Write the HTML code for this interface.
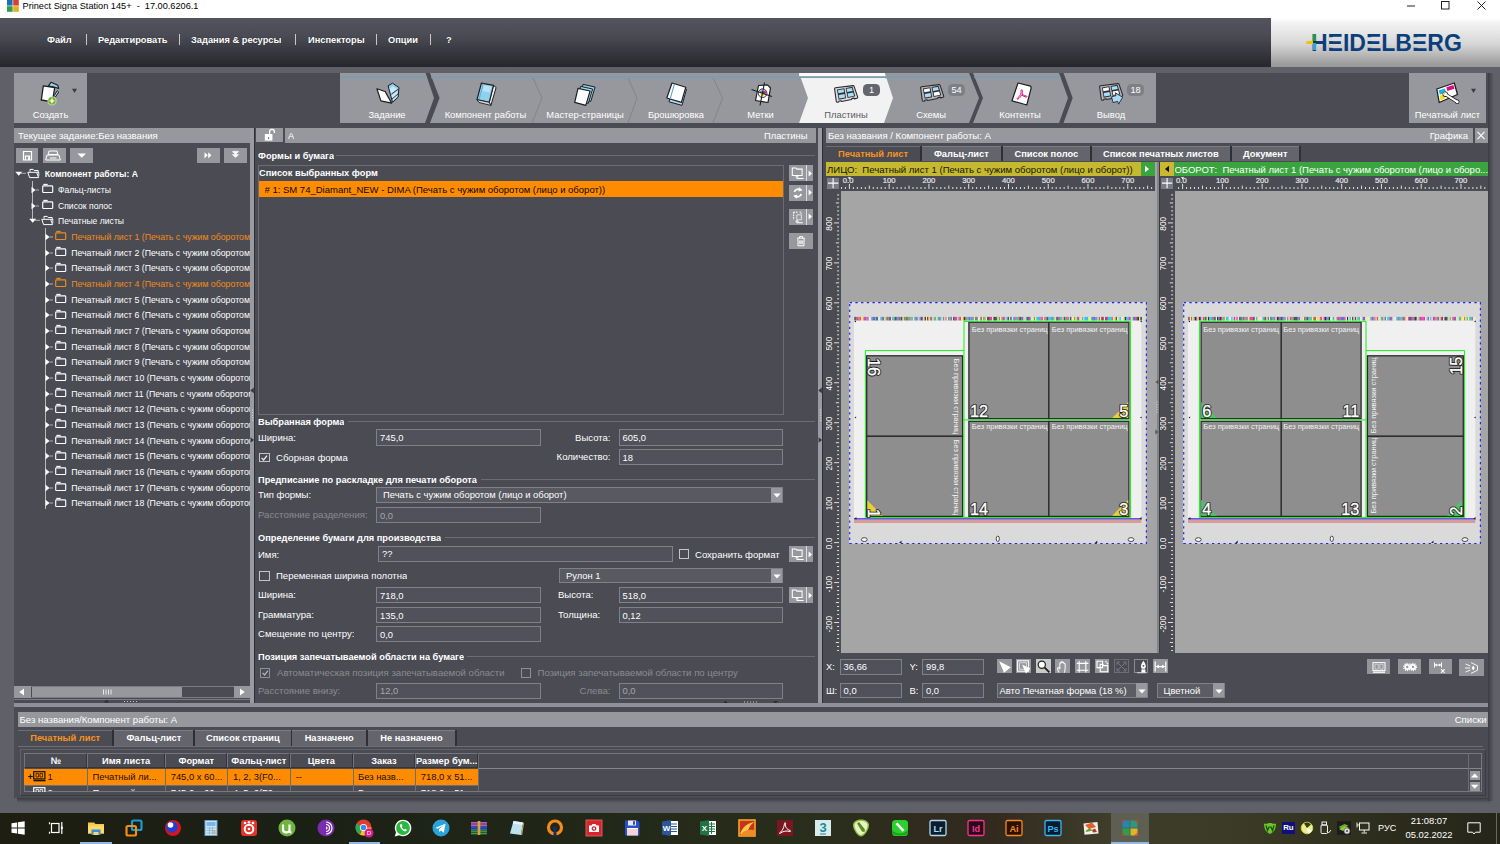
<!DOCTYPE html>
<html lang="ru"><head><meta charset="utf-8"><title>Prinect Signa Station</title>
<style>
html,body{margin:0;padding:0;}
body{width:1500px;height:844px;overflow:hidden;position:relative;background:#5f6068;font-family:"Liberation Sans",sans-serif;font-size:9.4px;color:#fff;}
div,svg,span{position:absolute;box-sizing:border-box;}
.t{white-space:nowrap;overflow:hidden;}
.btn{background:#97989d;}
.fld{background:#50515a;border:1px solid #808188;color:#fff;font-size:9.4px;padding-left:3px;white-space:nowrap;overflow:hidden;}
.hdr{background:#97989d;color:#fff;}
.cb{width:11px;height:11px;border:1px solid #b9babd;background:#4a4b53;}
</style></head><body>

<div style="left:0px;top:0px;width:1500px;height:18px;background:#fff;"></div>
<svg style="left:6px;top:-0.500px" width="14" height="14" viewBox="0 0 14 14"><rect x="1" y="0" width="5.6" height="5.6" fill="#1b6fb8"/><rect x="7.2" y="0" width="5.6" height="5.6" fill="#d8402f"/><rect x="1" y="6.2" width="5.6" height="5.6" fill="#2f9c48"/><rect x="7.2" y="6.2" width="5.6" height="5.6" fill="#e0b020"/></svg>
<div class="t" style="left:22.5px;top:0.0px;height:12px;line-height:12px;font-size:9.2px;color:#000;">Prinect Signa Station 145+&nbsp; -&nbsp; 17.00.6206.1</div>
<svg style="left:1400px;top:0" width="100" height="14" viewBox="0 0 100 14"><path d="M7 6h8" stroke="#222" stroke-width="1" fill="none"/><rect x="41.5" y="1.5" width="7.5" height="7.5" stroke="#222" fill="none"/><path d="M77.5 1.5l8 8M85.5 1.5l-8 8" stroke="#222" stroke-width="1" fill="none"/></svg>
<div style="left:0px;top:18px;width:1500px;height:49px;background:linear-gradient(#52535c 0%,#4a4b54 35%,#34353b 75%,#26272c 100%);"></div>
<div class="t" style="left:47px;top:33.5px;height:12px;line-height:12px;font-size:9.3px;color:#fff;font-weight:bold;text-shadow:0 0 1px #222;">Файл</div>
<div class="t" style="left:98px;top:33.5px;height:12px;line-height:12px;font-size:9.3px;color:#fff;font-weight:bold;text-shadow:0 0 1px #222;">Редактировать</div>
<div class="t" style="left:191px;top:33.5px;height:12px;line-height:12px;font-size:9.3px;color:#fff;font-weight:bold;text-shadow:0 0 1px #222;">Задания &amp; ресурсы</div>
<div class="t" style="left:308px;top:33.5px;height:12px;line-height:12px;font-size:9.3px;color:#fff;font-weight:bold;text-shadow:0 0 1px #222;">Инспекторы</div>
<div class="t" style="left:388px;top:33.5px;height:12px;line-height:12px;font-size:9.3px;color:#fff;font-weight:bold;text-shadow:0 0 1px #222;">Опции</div>
<div class="t" style="left:446px;top:33.5px;height:12px;line-height:12px;font-size:9.3px;color:#fff;font-weight:bold;text-shadow:0 0 1px #222;">?</div>
<div style="left:86px;top:34px;width:1px;height:11px;background:#c8c8cc;"></div>
<div style="left:179px;top:34px;width:1px;height:11px;background:#c8c8cc;"></div>
<div style="left:295px;top:34px;width:1px;height:11px;background:#c8c8cc;"></div>
<div style="left:376px;top:34px;width:1px;height:11px;background:#c8c8cc;"></div>
<div style="left:430px;top:34px;width:1px;height:11px;background:#c8c8cc;"></div>
<div style="left:1271px;top:18px;width:229px;height:49px;background:linear-gradient(#ffffff 0%,#f3f3f3 9%,#e6e6e6 30%,#d6d6d6 53%,#b4b4b4 78%,#a0a0a0 91%,#989898 100%);"></div>
<div class="t" style="left:1311.200px;top:29.600px;height:26px;line-height:26px;font-size:23.400px;font-weight:bold;color:#0b3f7c;transform:scaleX(0.9836);transform-origin:0 0;overflow:visible;">HEIDELBERG</div>
<div style="left:1328.70px;top:18px;width:4.600px;height:49px;background:linear-gradient(#ffffff 0%,#f3f3f3 9%,#e6e6e6 30%,#d6d6d6 53%,#b4b4b4 78%,#a0a0a0 91%,#989898 100%);clip-path:inset(19.20px 0 26.00px 0);"></div>
<div style="left:1328.70px;top:18px;width:4.600px;height:49px;background:linear-gradient(#ffffff 0%,#f3f3f3 9%,#e6e6e6 30%,#d6d6d6 53%,#b4b4b4 78%,#a0a0a0 91%,#989898 100%);clip-path:inset(25.90px 0 19.20px 0);"></div>
<div style="left:1367.10px;top:18px;width:4.600px;height:49px;background:linear-gradient(#ffffff 0%,#f3f3f3 9%,#e6e6e6 30%,#d6d6d6 53%,#b4b4b4 78%,#a0a0a0 91%,#989898 100%);clip-path:inset(19.20px 0 26.00px 0);"></div>
<div style="left:1367.10px;top:18px;width:4.600px;height:49px;background:linear-gradient(#ffffff 0%,#f3f3f3 9%,#e6e6e6 30%,#d6d6d6 53%,#b4b4b4 78%,#a0a0a0 91%,#989898 100%);clip-path:inset(25.90px 0 19.20px 0);"></div>
<div style="left:1413.10px;top:18px;width:4.600px;height:49px;background:linear-gradient(#ffffff 0%,#f3f3f3 9%,#e6e6e6 30%,#d6d6d6 53%,#b4b4b4 78%,#a0a0a0 91%,#989898 100%);clip-path:inset(19.20px 0 26.00px 0);"></div>
<div style="left:1413.10px;top:18px;width:4.600px;height:49px;background:linear-gradient(#ffffff 0%,#f3f3f3 9%,#e6e6e6 30%,#d6d6d6 53%,#b4b4b4 78%,#a0a0a0 91%,#989898 100%);clip-path:inset(25.90px 0 19.20px 0);"></div>
<div style="left:1312.8px;top:34px;width:3.5px;height:7.2px;background:#1e9a48;"></div>
<div style="left:1312.8px;top:41px;width:3.5px;height:2.4px;background:#0c3a4a;"></div>
<div style="left:1312.8px;top:43.4px;width:3.5px;height:6.8px;background:#2aa6e8;"></div>
<div style="left:1305.5px;top:40.6px;width:7.5px;height:3px;background:#f5c400;border-radius:1.500px 0 0 1.500px;"></div>
<div style="left:14px;top:73px;width:1474px;height:632px;background:#4a4b53;"></div>
<div style="left:14px;top:73px;width:73px;height:50px;background:#97989d;"></div>
<svg style="left:38px;top:80px" width="24" height="27" viewBox="0 0 24 27" stroke-linejoin="round">
<path d="M10.400 5.800L13.100 2.200 19.800 5.300 20.700 8.400 17.500 7.500z" fill="#8fd0ee" stroke="#1e1e22" stroke-width="1.100"/>
<path d="M19.300 10.700L20.700 12 17.500 16.900 16.200 15.500z" fill="#a6d8f0" stroke="#1e1e22" stroke-width="1"/>
<path d="M5.300 5.800L16.700 7.500 14.400 21.800 3.300 20z" fill="#fff" stroke="#1e1e22" stroke-width="1.300"/>
<circle cx="14" cy="20.900" r="4.100" fill="#79b22a" stroke="#dfe9cf" stroke-width="0.700"/>
<path d="M11.600 20.900h4.800M14 18.600v4.600" stroke="#fff" stroke-width="1.400"/>
</svg>
<svg style="left:71px;top:87.600px" width="8" height="6" viewBox="0 0 8 6"><path d="M1 0.800h5L3.500 5z" fill="#3a3b41"/></svg>
<div class="t" style="left:14px;top:109.2px;height:12px;line-height:12px;font-size:9.4px;color:#fff;width:73px;text-align:center;">Создать</div>
<svg style="left:340px;top:73px" width="816" height="50" viewBox="0 0 816 50">
<polygon points="0,0 85.6,0 94,25 85,50 0,50" fill="#97989d"/>
<polygon points="90,0 629,0 639,25 629,50 90,50 99.6,25" fill="#97989d"/>
<polygon points="633,0 719,0 728,25 719,50 633,50 643,25" fill="#97989d"/>
<polygon points="723.5,0 816,0 816,50 723.5,50 732.7,25" fill="#97989d"/>
<polygon points="459,0 544.8,0 553,25 544,50 459,50 468,25" fill="#f2f2f2"/>
<path d="M193,5 L202,25 L192,50 M288,5 L297,25 L288,50 M373,5 L382.6,25 L373,50" stroke="#83848a" stroke-width="1" fill="none"/>
<path d="M0,4.300H86.700M91.200,4.300H459M545,4.300H630.300M634.300,4.300H720.300" stroke="#7d9db1" stroke-width="2" fill="none"/>
<rect x="459" y="0" width="86" height="3.2" fill="#fbfbfb"/>
<rect x="459" y="3.2" width="86.5" height="1.8" fill="#7c9cb0"/>
</svg>
<div class="t" style="left:327px;top:109.2px;height:12px;line-height:12px;font-size:9.4px;color:#fff;width:120px;text-align:center;">Задание</div>
<div class="t" style="left:425.5px;top:109.2px;height:12px;line-height:12px;font-size:9.4px;color:#fff;width:120px;text-align:center;">Компонент работы</div>
<div class="t" style="left:525px;top:109.2px;height:12px;line-height:12px;font-size:9.4px;color:#fff;width:120px;text-align:center;">Мастер-страницы</div>
<div class="t" style="left:616px;top:109.2px;height:12px;line-height:12px;font-size:9.4px;color:#fff;width:120px;text-align:center;">Брошюровка</div>
<div class="t" style="left:700.5px;top:109.2px;height:12px;line-height:12px;font-size:9.4px;color:#fff;width:120px;text-align:center;">Метки</div>
<div class="t" style="left:786px;top:109.2px;height:12px;line-height:12px;font-size:9.4px;color:#5c5d64;width:120px;text-align:center;">Пластины</div>
<div class="t" style="left:871px;top:109.2px;height:12px;line-height:12px;font-size:9.4px;color:#fff;width:120px;text-align:center;">Схемы</div>
<div class="t" style="left:960px;top:109.2px;height:12px;line-height:12px;font-size:9.4px;color:#fff;width:120px;text-align:center;">Контенты</div>
<div class="t" style="left:1051px;top:109.2px;height:12px;line-height:12px;font-size:9.4px;color:#fff;width:120px;text-align:center;">Вывод</div>
<div style="left:863px;top:83.7px;width:17px;height:12.2px;background:#65666d;border-radius:4.500px;"></div>
<div class="t" style="left:863px;top:83.7px;height:12px;line-height:12px;font-size:9.2px;color:#fff;width:17px;text-align:center;">1</div>
<div style="left:948px;top:83.7px;width:17px;height:12.2px;background:#7f8086;border-radius:4.500px;"></div>
<div class="t" style="left:948px;top:83.7px;height:12px;line-height:12px;font-size:9.2px;color:#fff;width:17px;text-align:center;">54</div>
<div style="left:1127px;top:83.7px;width:17px;height:12.2px;background:#7f8086;border-radius:4.500px;"></div>
<div class="t" style="left:1127px;top:83.7px;height:12px;line-height:12px;font-size:9.2px;color:#fff;width:17px;text-align:center;">18</div>
<div style="left:1409px;top:73px;width:77px;height:50px;background:#97989d;"></div>
<svg style="left:1470px;top:87.600px" width="8" height="6" viewBox="0 0 8 6"><path d="M1 0.800h5L3.500 5z" fill="#3a3b41"/></svg>
<div class="t" style="left:1409px;top:109.2px;height:12px;line-height:12px;font-size:9.4px;color:#fff;width:77px;text-align:center;">Печатный лист</div>
<svg style="left:375.6px;top:81.5px" width="24" height="25" viewBox="0 0 24 25" stroke-linejoin="round"><path d="M12.1 3.8L16.5 1.2 22.9 5.5 22.2 15.100 16.500 20.300z" fill="#8fd0ee" stroke="#1e1e22" stroke-width="1"/>
<path d="M13.500 6.500L17 4.200 21.500 7.200 15.500 12zM15.500 13.500l6-4.500-.3 5.500-4 4z" fill="#c9e9f7"/>
<path d="M15.500 12l6.300-4.600M16 17l6-5" stroke="#1e1e22" stroke-width="0.900" fill="none"/>
<path d="M0.900 6.800L9.200 9.500 15.600 21.100 4.900 18.900z" fill="#fff" stroke="#1e1e22" stroke-width="1.200"/></svg>
<svg style="left:476px;top:81.5px" width="24" height="25" viewBox="0 0 24 25" stroke-linejoin="round"><path d="M17.500 3.300L20.100 5.500 14.900 23.400 13.200 20.300z" fill="#f2f2f2" stroke="#1e1e22" stroke-width="1"/>
<path d="M5.400 1.200L17.500 3.300 13.200 20.300 1 17.700z" fill="#8fd0ee" stroke="#1e1e22" stroke-width="1.200"/>
<path d="M7.800 3.300L15.300 4.600 13.800 10.500 6.400 9z" fill="#b9e2f5"/>
<path d="M7.200 1.600L3 18" stroke="#5aa9d0" stroke-width="0.900"/>
<path d="M1 17.700L13.200 20.300 14.900 23.400 3 20.500z" fill="#d8d8d8" stroke="#1e1e22" stroke-width="0.900"/></svg>
<svg style="left:573.5px;top:81.5px" width="24" height="25" viewBox="0 0 24 25" stroke-linejoin="round"><path d="M9 2.400L21.100 5 16.800 19.400 5.500 16.300z" fill="#8fd0ee" stroke="#1e1e22" stroke-width="1"/>
<path d="M6.500 4.400L18.600 7 14.300 21.400 3 18.300z" fill="#a8daf0" stroke="#1e1e22" stroke-width="1"/>
<path d="M4 6.400L16.100 9 11.800 23.400 0.700 20.300z" fill="#fff" stroke="#1e1e22" stroke-width="1.200"/></svg>
<svg style="left:665.6px;top:81.5px" width="24" height="25" viewBox="0 0 24 25" stroke-linejoin="round"><path d="M7.500 3.800L20.500 7.200 16 23.400 3 19.800z" fill="#a8daf0" stroke="#1e1e22" stroke-width="1"/>
<path d="M6 1L19.800 5.200 15.400 20.300 0.800 16z" fill="#fff" stroke="#1e1e22" stroke-width="1.200"/>
<path d="M8.400 2L4.200 16.800" stroke="#5aa9d0" stroke-width="1.100"/></svg>
<svg style="left:750.5px;top:81.5px" width="24" height="25" viewBox="0 0 24 25" stroke-linejoin="round"><path d="M7.500 3.500L16.500 2.800 19.500 6 17 20.500 4.500 18.500z" fill="#fff" stroke="#1e1e22" stroke-width="1.200"/>
<circle cx="11.600" cy="11.200" r="4.300" fill="none" stroke="#1e1e22" stroke-width="0.900"/>
<circle cx="10.400" cy="10" r="1.700" fill="#24a8e0"/><circle cx="13.400" cy="10.300" r="1.700" fill="#e0188c"/><circle cx="11.200" cy="12.800" r="1.700" fill="#f5e11a"/>
<path d="M13.500 0.500L9 23.500M0.500 7.500L21 14.500" stroke="#1e1e22" stroke-width="1.100"/></svg>
<svg style="left:834px;top:84.8px" width="25" height="23" viewBox="0 0 25 23" stroke-linejoin="round"><path d="M1.500 2.700L18.800 0.600Q19.800 0.500 20.100 1.400L23.700 12.200Q23.900 13.100 23 13.300L20.500 13.900 20 13.100 17.800 13.600 17.600 14.500 7.500 16.500 7 15.700 4.800 16.200 4.600 17 3.400 17.200Q2.500 17.300 2.300 16.400L0.600 3.800Q0.500 2.900 1.500 2.700z" fill="#dcdcdc" stroke="#2a2a2e" stroke-width="1.100"/>
<path d="M2.900 4.400L10.400 3.200 12.100 13.300 4.700 14.800zM11.600 2.900L18.500 1.800 21.300 11.300 13.600 12.900z" fill="#2e2e32"/>
<path d="M3.900 5.200L9.600 4.300 10.100 7.300 4.400 8.300z" fill="#a8e0fa"/>
<path d="M12.600 3.800L17.900 3 18.700 5.900 13.200 6.900z" fill="#a8e0fa"/>
<path d="M4.700 10L10.500 9 11.100 12.400 5.300 13.500z" fill="#a8e0fa"/>
<path d="M13.600 8.600L19.200 7.600 20.100 10.800 14.300 11.900z" fill="#a8e0fa"/></svg>
<svg style="left:920px;top:84px" width="25" height="23" viewBox="0 0 25 23" stroke-linejoin="round"><path d="M1.500 2.700L18.800 0.600Q19.800 0.500 20.100 1.400L23.700 12.200Q23.900 13.100 23 13.300L20.500 13.900 20 13.100 17.800 13.600 17.600 14.500 7.500 16.500 7 15.700 4.800 16.200 4.600 17 3.400 17.200Q2.500 17.300 2.300 16.400L0.600 3.800Q0.500 2.900 1.500 2.700z" fill="#b4b5b9" stroke="#2a2a2e" stroke-width="1.100"/>
<path d="M2.900 4.400L10.400 3.200 12.100 13.300 4.700 14.800zM11.600 2.900L18.500 1.800 21.300 11.300 13.600 12.900z" fill="#2e2e32"/>
<path d="M3.900 5.200L9.600 4.300 10.100 7.300 4.400 8.300z" fill="#fff"/>
<path d="M12.600 3.800L17.900 3 18.700 5.900 13.200 6.900z" fill="#a8e0fa"/>
<path d="M4.700 10L10.500 9 11.100 12.400 5.300 13.500z" fill="#a8e0fa"/>
<path d="M13.600 8.600L19.200 7.600 20.100 10.800 14.300 11.900z" fill="#fff"/></svg>
<svg style="left:1099.3px;top:83px" width="25" height="23" viewBox="0 0 25 23" stroke-linejoin="round"><path d="M1.500 2.700L18.800 0.600Q19.800 0.500 20.100 1.400L23.700 12.200Q23.900 13.100 23 13.300L20.500 13.900 20 13.100 17.800 13.600 17.600 14.500 7.500 16.500 7 15.700 4.800 16.200 4.600 17 3.400 17.200Q2.500 17.300 2.300 16.400L0.600 3.800Q0.500 2.900 1.500 2.700z" fill="#b4b5b9" stroke="#2a2a2e" stroke-width="1.100"/>
<path d="M2.900 4.400L10.400 3.200 12.100 13.300 4.700 14.800zM11.600 2.900L18.500 1.800 21.300 11.300 13.600 12.900z" fill="#2e2e32"/>
<path d="M3.900 5.200L9.600 4.300 10.100 7.300 4.400 8.300z" fill="#fff"/>
<path d="M12.600 3.800L17.900 3 18.700 5.900 13.200 6.900z" fill="#a8e0fa"/>
<path d="M4.700 10L10.500 9 11.100 12.400 5.300 13.500z" fill="#a8e0fa"/>
<path d="M13.600 8.600L19.200 7.600 20.100 10.800 14.300 11.900z" fill="#fff"/><path d="M12.500 13.800L17 12.600 16.300 9.800 23.600 14.200 19.600 21.200 18.700 18.400 14 19.600z" fill="#a9dcf4" stroke="#2a2a2e" stroke-width="0.900"/></svg>
<svg style="left:1011px;top:81.5px" width="24" height="25" viewBox="0 0 24 25" stroke-linejoin="round"><path d="M7 1L19.600 4.200 20.200 5.800 15.800 23 1 18.800z" fill="#fff" stroke="#1e1e22" stroke-width="1.200"/>
<path d="M10.600 6.500c1.300-.3 1.200 2 .3 5 1.600 1.300 3.800 2 5.400 2.400 1.100.4.600 1.400-.6 1.100-1.800-.5-3.600-1.400-5.200-2.300-1 1.700-2.600 3.700-4.200 4.600-1.100.5-1.600-.6-.6-1.200 1.500-.9 2.800-2.500 3.700-4.200.6-1.800.5-3.500.400-4.400 0-.5.300-.9.800-1z" fill="none" stroke="#d6127c" stroke-width="1.150" transform="translate(1.6 2.2) scale(0.86)"/></svg>
<svg style="left:1435.5px;top:82px" width="25" height="24" viewBox="0 0 25 24" stroke-linejoin="round"><path d="M0.800 7L18.300 1 21.500 12.500 3.200 20.500z" fill="#fff" stroke="#1e1e22" stroke-width="1.300"/>
<path d="M2.500 8.400L8.900 6.600 10 10.500 3.900 12.500z" fill="#18b0e8"/>
<path d="M10.300 5.200L17.400 2.900 18.500 6.700 11.400 8.900z" fill="#d6127c"/>
<path d="M3.600 13.800L7.800 12.600 9.200 16.600 4.700 18.400z" fill="#f5e11a"/>
<path d="M9.500 12.400L21.200 19.800" stroke="#1e1e22" stroke-width="3.600" stroke-linecap="round"/>
<circle cx="9.300" cy="12.200" r="2.700" fill="#1e1e22"/><circle cx="21.200" cy="19.800" r="2.300" fill="#1e1e22"/>
<path d="M9.500 12.400L21.200 19.800" stroke="#fff" stroke-width="2" stroke-linecap="round"/>
<circle cx="9.300" cy="12.200" r="1.900" fill="#fff"/><circle cx="21.200" cy="19.800" r="1.500" fill="#fff"/>
<circle cx="8.200" cy="11.400" r="1.100" fill="#f5e11a"/></svg>
<div style="left:14px;top:128px;width:236px;height:14.7px;background:#97989d;"></div>
<div class="t" style="left:18px;top:129.5px;height:12px;line-height:12px;font-size:9.6px;color:#fff;">Текущее задание:Без названия</div>
<div style="left:250px;top:128px;width:4px;height:577px;background:#9a9ba0;"></div>
<div style="left:16px;top:148px;width:22px;height:14.5px;background:#97989d;"></div>
<div style="left:43px;top:148px;width:22.7px;height:14.5px;background:#97989d;"></div>
<div style="left:70px;top:148px;width:23px;height:14.5px;background:#97989d;"></div>
<div style="left:197px;top:148px;width:22.7px;height:14.5px;background:#97989d;"></div>
<div style="left:224px;top:148px;width:23px;height:14.5px;background:#97989d;"></div>
<svg style="left:16px;top:148px" width="232" height="15" viewBox="0 0 232 15">
<path d="M7.5 3.5h8v8.5h-8zM9.5 8.2h4v3.8h-4z" fill="none" stroke="#fff" stroke-width="1.2"/><rect x="12" y="9" width="1.4" height="3" fill="#fff"/>
<path d="M33 3h8l.8 3.5h-9.6zM31 7h12l1.3 5h-14.6zM34 10h6.5" fill="none" stroke="#fff" stroke-width="1"/>
<path d="M61.5 5.5h8.5l-4.2 4.2z" fill="#fff"/>
<path d="M188.5 4.2l3.2 3.1-3.2 3.1zM192.2 4.2l3.2 3.1-3.2 3.1z" fill="#fff"/>
<path d="M216.3 3.6h6.4l-3.2 2.8zM216.3 6.6h6.4l-3.2 3zM217 3.3h5" fill="#fff" stroke="#fff" stroke-width="0.5"/>
</svg>
<div style="left:31.6px;top:181px;width:1px;height:40px;background:#b9babd;"></div>
<div style="left:44.8px;top:228px;width:1px;height:281px;background:#b9babd;"></div>
<svg style="left:15.3px;top:171.2px" width="12" height="7" viewBox="0 0 12 7"><path d="M0.2 0.8h7L3.7 4.8z" fill="#fff"/><path d="M6 2.3H11" stroke="#c8c8cb" stroke-width="0.8"/></svg>
<svg style="left:27px;top:167.7px" width="13" height="11" viewBox="0 0 13 11"><path d="M3 3.6V1.4h3.2l1 1.1h4v2.2" fill="none" stroke="#fff" stroke-width="1"/><path d="M0.8 4.3h8.8l2 5.3H2.6z" fill="none" stroke="#fff" stroke-width="1" stroke-linejoin="round"/><path d="M9.6 4.3h2.2v4" fill="none" stroke="#fff" stroke-width="0.9"/></svg>
<div class="t" style="left:44.7px;top:168.2px;height:12px;line-height:12px;font-size:8.7px;color:#fff;font-weight:bold;">Компонент работы: A</div>
<svg style="left:31.4px;top:185.867px" width="8" height="8" viewBox="0 0 8 8"><path d="M0.5 0.8L4.6 4 0.5 7.2z" fill="#fff"/><path d="M4.6 4H8" stroke="#c8c8cb" stroke-width="0.8"/></svg>
<svg style="left:41.7px;top:183.367px" width="12" height="11" viewBox="0 0 12 11"><path d="M1.3 1.4h4.4" stroke="#fff" stroke-width="1.1"/><rect x="0.7" y="2.9" width="10" height="6.6" rx="0.8" fill="none" stroke="#fff" stroke-width="1.15"/></svg>
<div class="t" style="left:58px;top:183.867px;height:12px;line-height:12px;font-size:8.6px;color:#fff;">Фальц-листы</div>
<svg style="left:31.4px;top:201.534px" width="8" height="8" viewBox="0 0 8 8"><path d="M0.5 0.8L4.6 4 0.5 7.2z" fill="#fff"/><path d="M4.6 4H8" stroke="#c8c8cb" stroke-width="0.8"/></svg>
<svg style="left:41.7px;top:199.034px" width="12" height="11" viewBox="0 0 12 11"><path d="M1.3 1.4h4.4" stroke="#fff" stroke-width="1.1"/><rect x="0.7" y="2.9" width="10" height="6.6" rx="0.8" fill="none" stroke="#fff" stroke-width="1.15"/></svg>
<div class="t" style="left:58px;top:199.534px;height:12px;line-height:12px;font-size:8.6px;color:#fff;">Список полос</div>
<svg style="left:29px;top:218.201px" width="12" height="7" viewBox="0 0 12 7"><path d="M0.2 0.8h7L3.7 4.8z" fill="#fff"/><path d="M6 2.3H11" stroke="#c8c8cb" stroke-width="0.8"/></svg>
<svg style="left:40.5px;top:214.701px" width="13" height="11" viewBox="0 0 13 11"><path d="M3 3.6V1.4h3.2l1 1.1h4v2.2" fill="none" stroke="#fff" stroke-width="1"/><path d="M0.8 4.3h8.8l2 5.3H2.6z" fill="none" stroke="#fff" stroke-width="1" stroke-linejoin="round"/><path d="M9.6 4.3h2.2v4" fill="none" stroke="#fff" stroke-width="0.9"/></svg>
<div class="t" style="left:58px;top:215.201px;height:12px;line-height:12px;font-size:8.6px;color:#fff;">Печатные листы</div>
<svg style="left:45px;top:232.868px" width="8" height="8" viewBox="0 0 8 8"><path d="M0.5 0.8L4.6 4 0.5 7.2z" fill="#fff"/><path d="M4.6 4H8" stroke="#c8c8cb" stroke-width="0.8"/></svg>
<svg style="left:55px;top:230.368px" width="12" height="11" viewBox="0 0 12 11"><path d="M1.3 1.4h4.4" stroke="#f08c1a" stroke-width="1.1"/><rect x="0.7" y="2.9" width="10" height="6.6" rx="0.8" fill="none" stroke="#f08c1a" stroke-width="1.15"/></svg>
<div class="t" style="left:71.2px;top:230.868px;height:12px;line-height:12px;font-size:8.75px;color:#f08c1a;width:178.8px;">Печатный лист 1 (Печать с чужим оборотом (лицо и оборот))</div>
<svg style="left:45px;top:248.53499999999997px" width="8" height="8" viewBox="0 0 8 8"><path d="M0.5 0.8L4.6 4 0.5 7.2z" fill="#fff"/><path d="M4.6 4H8" stroke="#c8c8cb" stroke-width="0.8"/></svg>
<svg style="left:55px;top:246.03499999999997px" width="12" height="11" viewBox="0 0 12 11"><path d="M1.3 1.4h4.4" stroke="#fff" stroke-width="1.1"/><rect x="0.7" y="2.9" width="10" height="6.6" rx="0.8" fill="none" stroke="#fff" stroke-width="1.15"/></svg>
<div class="t" style="left:71.2px;top:246.53499999999997px;height:12px;line-height:12px;font-size:8.75px;color:#fff;width:178.8px;">Печатный лист 2 (Печать с чужим оборотом (лицо и оборот))</div>
<svg style="left:45px;top:264.202px" width="8" height="8" viewBox="0 0 8 8"><path d="M0.5 0.8L4.6 4 0.5 7.2z" fill="#fff"/><path d="M4.6 4H8" stroke="#c8c8cb" stroke-width="0.8"/></svg>
<svg style="left:55px;top:261.702px" width="12" height="11" viewBox="0 0 12 11"><path d="M1.3 1.4h4.4" stroke="#fff" stroke-width="1.1"/><rect x="0.7" y="2.9" width="10" height="6.6" rx="0.8" fill="none" stroke="#fff" stroke-width="1.15"/></svg>
<div class="t" style="left:71.2px;top:262.202px;height:12px;line-height:12px;font-size:8.75px;color:#fff;width:178.8px;">Печатный лист 3 (Печать с чужим оборотом (лицо и оборот))</div>
<svg style="left:45px;top:279.86899999999997px" width="8" height="8" viewBox="0 0 8 8"><path d="M0.5 0.8L4.6 4 0.5 7.2z" fill="#fff"/><path d="M4.6 4H8" stroke="#c8c8cb" stroke-width="0.8"/></svg>
<svg style="left:55px;top:277.36899999999997px" width="12" height="11" viewBox="0 0 12 11"><path d="M1.3 1.4h4.4" stroke="#f08c1a" stroke-width="1.1"/><rect x="0.7" y="2.9" width="10" height="6.6" rx="0.8" fill="none" stroke="#f08c1a" stroke-width="1.15"/></svg>
<div class="t" style="left:71.2px;top:277.86899999999997px;height:12px;line-height:12px;font-size:8.75px;color:#f08c1a;width:178.8px;">Печатный лист 4 (Печать с чужим оборотом (лицо и оборот))</div>
<svg style="left:45px;top:295.536px" width="8" height="8" viewBox="0 0 8 8"><path d="M0.5 0.8L4.6 4 0.5 7.2z" fill="#fff"/><path d="M4.6 4H8" stroke="#c8c8cb" stroke-width="0.8"/></svg>
<svg style="left:55px;top:293.036px" width="12" height="11" viewBox="0 0 12 11"><path d="M1.3 1.4h4.4" stroke="#fff" stroke-width="1.1"/><rect x="0.7" y="2.9" width="10" height="6.6" rx="0.8" fill="none" stroke="#fff" stroke-width="1.15"/></svg>
<div class="t" style="left:71.2px;top:293.536px;height:12px;line-height:12px;font-size:8.75px;color:#fff;width:178.8px;">Печатный лист 5 (Печать с чужим оборотом (лицо и оборот))</div>
<svg style="left:45px;top:311.203px" width="8" height="8" viewBox="0 0 8 8"><path d="M0.5 0.8L4.6 4 0.5 7.2z" fill="#fff"/><path d="M4.6 4H8" stroke="#c8c8cb" stroke-width="0.8"/></svg>
<svg style="left:55px;top:308.703px" width="12" height="11" viewBox="0 0 12 11"><path d="M1.3 1.4h4.4" stroke="#fff" stroke-width="1.1"/><rect x="0.7" y="2.9" width="10" height="6.6" rx="0.8" fill="none" stroke="#fff" stroke-width="1.15"/></svg>
<div class="t" style="left:71.2px;top:309.203px;height:12px;line-height:12px;font-size:8.75px;color:#fff;width:178.8px;">Печатный лист 6 (Печать с чужим оборотом (лицо и оборот))</div>
<svg style="left:45px;top:326.87px" width="8" height="8" viewBox="0 0 8 8"><path d="M0.5 0.8L4.6 4 0.5 7.2z" fill="#fff"/><path d="M4.6 4H8" stroke="#c8c8cb" stroke-width="0.8"/></svg>
<svg style="left:55px;top:324.37px" width="12" height="11" viewBox="0 0 12 11"><path d="M1.3 1.4h4.4" stroke="#fff" stroke-width="1.1"/><rect x="0.7" y="2.9" width="10" height="6.6" rx="0.8" fill="none" stroke="#fff" stroke-width="1.15"/></svg>
<div class="t" style="left:71.2px;top:324.87px;height:12px;line-height:12px;font-size:8.75px;color:#fff;width:178.8px;">Печатный лист 7 (Печать с чужим оборотом (лицо и оборот))</div>
<svg style="left:45px;top:342.537px" width="8" height="8" viewBox="0 0 8 8"><path d="M0.5 0.8L4.6 4 0.5 7.2z" fill="#fff"/><path d="M4.6 4H8" stroke="#c8c8cb" stroke-width="0.8"/></svg>
<svg style="left:55px;top:340.037px" width="12" height="11" viewBox="0 0 12 11"><path d="M1.3 1.4h4.4" stroke="#fff" stroke-width="1.1"/><rect x="0.7" y="2.9" width="10" height="6.6" rx="0.8" fill="none" stroke="#fff" stroke-width="1.15"/></svg>
<div class="t" style="left:71.2px;top:340.537px;height:12px;line-height:12px;font-size:8.75px;color:#fff;width:178.8px;">Печатный лист 8 (Печать с чужим оборотом (лицо и оборот))</div>
<svg style="left:45px;top:358.20399999999995px" width="8" height="8" viewBox="0 0 8 8"><path d="M0.5 0.8L4.6 4 0.5 7.2z" fill="#fff"/><path d="M4.6 4H8" stroke="#c8c8cb" stroke-width="0.8"/></svg>
<svg style="left:55px;top:355.70399999999995px" width="12" height="11" viewBox="0 0 12 11"><path d="M1.3 1.4h4.4" stroke="#fff" stroke-width="1.1"/><rect x="0.7" y="2.9" width="10" height="6.6" rx="0.8" fill="none" stroke="#fff" stroke-width="1.15"/></svg>
<div class="t" style="left:71.2px;top:356.20399999999995px;height:12px;line-height:12px;font-size:8.75px;color:#fff;width:178.8px;">Печатный лист 9 (Печать с чужим оборотом (лицо и оборот))</div>
<svg style="left:45px;top:373.871px" width="8" height="8" viewBox="0 0 8 8"><path d="M0.5 0.8L4.6 4 0.5 7.2z" fill="#fff"/><path d="M4.6 4H8" stroke="#c8c8cb" stroke-width="0.8"/></svg>
<svg style="left:55px;top:371.371px" width="12" height="11" viewBox="0 0 12 11"><path d="M1.3 1.4h4.4" stroke="#fff" stroke-width="1.1"/><rect x="0.7" y="2.9" width="10" height="6.6" rx="0.8" fill="none" stroke="#fff" stroke-width="1.15"/></svg>
<div class="t" style="left:71.2px;top:371.871px;height:12px;line-height:12px;font-size:8.75px;color:#fff;width:178.8px;">Печатный лист 10 (Печать с чужим оборотом (лицо и оборот))</div>
<svg style="left:45px;top:389.538px" width="8" height="8" viewBox="0 0 8 8"><path d="M0.5 0.8L4.6 4 0.5 7.2z" fill="#fff"/><path d="M4.6 4H8" stroke="#c8c8cb" stroke-width="0.8"/></svg>
<svg style="left:55px;top:387.038px" width="12" height="11" viewBox="0 0 12 11"><path d="M1.3 1.4h4.4" stroke="#fff" stroke-width="1.1"/><rect x="0.7" y="2.9" width="10" height="6.6" rx="0.8" fill="none" stroke="#fff" stroke-width="1.15"/></svg>
<div class="t" style="left:71.2px;top:387.538px;height:12px;line-height:12px;font-size:8.75px;color:#fff;width:178.8px;">Печатный лист 11 (Печать с чужим оборотом (лицо и оборот))</div>
<svg style="left:45px;top:405.205px" width="8" height="8" viewBox="0 0 8 8"><path d="M0.5 0.8L4.6 4 0.5 7.2z" fill="#fff"/><path d="M4.6 4H8" stroke="#c8c8cb" stroke-width="0.8"/></svg>
<svg style="left:55px;top:402.705px" width="12" height="11" viewBox="0 0 12 11"><path d="M1.3 1.4h4.4" stroke="#fff" stroke-width="1.1"/><rect x="0.7" y="2.9" width="10" height="6.6" rx="0.8" fill="none" stroke="#fff" stroke-width="1.15"/></svg>
<div class="t" style="left:71.2px;top:403.205px;height:12px;line-height:12px;font-size:8.75px;color:#fff;width:178.8px;">Печатный лист 12 (Печать с чужим оборотом (лицо и оборот))</div>
<svg style="left:45px;top:420.87199999999996px" width="8" height="8" viewBox="0 0 8 8"><path d="M0.5 0.8L4.6 4 0.5 7.2z" fill="#fff"/><path d="M4.6 4H8" stroke="#c8c8cb" stroke-width="0.8"/></svg>
<svg style="left:55px;top:418.37199999999996px" width="12" height="11" viewBox="0 0 12 11"><path d="M1.3 1.4h4.4" stroke="#fff" stroke-width="1.1"/><rect x="0.7" y="2.9" width="10" height="6.6" rx="0.8" fill="none" stroke="#fff" stroke-width="1.15"/></svg>
<div class="t" style="left:71.2px;top:418.87199999999996px;height:12px;line-height:12px;font-size:8.75px;color:#fff;width:178.8px;">Печатный лист 13 (Печать с чужим оборотом (лицо и оборот))</div>
<svg style="left:45px;top:436.539px" width="8" height="8" viewBox="0 0 8 8"><path d="M0.5 0.8L4.6 4 0.5 7.2z" fill="#fff"/><path d="M4.6 4H8" stroke="#c8c8cb" stroke-width="0.8"/></svg>
<svg style="left:55px;top:434.039px" width="12" height="11" viewBox="0 0 12 11"><path d="M1.3 1.4h4.4" stroke="#fff" stroke-width="1.1"/><rect x="0.7" y="2.9" width="10" height="6.6" rx="0.8" fill="none" stroke="#fff" stroke-width="1.15"/></svg>
<div class="t" style="left:71.2px;top:434.539px;height:12px;line-height:12px;font-size:8.75px;color:#fff;width:178.8px;">Печатный лист 14 (Печать с чужим оборотом (лицо и оборот))</div>
<svg style="left:45px;top:452.20599999999996px" width="8" height="8" viewBox="0 0 8 8"><path d="M0.5 0.8L4.6 4 0.5 7.2z" fill="#fff"/><path d="M4.6 4H8" stroke="#c8c8cb" stroke-width="0.8"/></svg>
<svg style="left:55px;top:449.70599999999996px" width="12" height="11" viewBox="0 0 12 11"><path d="M1.3 1.4h4.4" stroke="#fff" stroke-width="1.1"/><rect x="0.7" y="2.9" width="10" height="6.6" rx="0.8" fill="none" stroke="#fff" stroke-width="1.15"/></svg>
<div class="t" style="left:71.2px;top:450.20599999999996px;height:12px;line-height:12px;font-size:8.75px;color:#fff;width:178.8px;">Печатный лист 15 (Печать с чужим оборотом (лицо и оборот))</div>
<svg style="left:45px;top:467.873px" width="8" height="8" viewBox="0 0 8 8"><path d="M0.5 0.8L4.6 4 0.5 7.2z" fill="#fff"/><path d="M4.6 4H8" stroke="#c8c8cb" stroke-width="0.8"/></svg>
<svg style="left:55px;top:465.373px" width="12" height="11" viewBox="0 0 12 11"><path d="M1.3 1.4h4.4" stroke="#fff" stroke-width="1.1"/><rect x="0.7" y="2.9" width="10" height="6.6" rx="0.8" fill="none" stroke="#fff" stroke-width="1.15"/></svg>
<div class="t" style="left:71.2px;top:465.873px;height:12px;line-height:12px;font-size:8.75px;color:#fff;width:178.8px;">Печатный лист 16 (Печать с чужим оборотом (лицо и оборот))</div>
<svg style="left:45px;top:483.53999999999996px" width="8" height="8" viewBox="0 0 8 8"><path d="M0.5 0.8L4.6 4 0.5 7.2z" fill="#fff"/><path d="M4.6 4H8" stroke="#c8c8cb" stroke-width="0.8"/></svg>
<svg style="left:55px;top:481.03999999999996px" width="12" height="11" viewBox="0 0 12 11"><path d="M1.3 1.4h4.4" stroke="#fff" stroke-width="1.1"/><rect x="0.7" y="2.9" width="10" height="6.6" rx="0.8" fill="none" stroke="#fff" stroke-width="1.15"/></svg>
<div class="t" style="left:71.2px;top:481.53999999999996px;height:12px;line-height:12px;font-size:8.75px;color:#fff;width:178.8px;">Печатный лист 17 (Печать с чужим оборотом (лицо и оборот))</div>
<svg style="left:45px;top:499.207px" width="8" height="8" viewBox="0 0 8 8"><path d="M0.5 0.8L4.6 4 0.5 7.2z" fill="#fff"/><path d="M4.6 4H8" stroke="#c8c8cb" stroke-width="0.8"/></svg>
<svg style="left:55px;top:496.707px" width="12" height="11" viewBox="0 0 12 11"><path d="M1.3 1.4h4.4" stroke="#fff" stroke-width="1.1"/><rect x="0.7" y="2.9" width="10" height="6.6" rx="0.8" fill="none" stroke="#fff" stroke-width="1.15"/></svg>
<div class="t" style="left:71.2px;top:497.207px;height:12px;line-height:12px;font-size:8.75px;color:#fff;width:178.8px;">Печатный лист 18 (Печать с чужим оборотом (лицо и оборот))</div>
<div style="left:14px;top:685.5px;width:236px;height:12px;background:#4a4b53;border:1px solid #7b7c83;"></div>
<div style="left:14px;top:685.5px;width:16.5px;height:12px;background:#97989d;"></div>
<div style="left:233.5px;top:685.5px;width:16.5px;height:12px;background:#97989d;"></div>
<div style="left:32px;top:686.5px;width:150px;height:10px;background:#97989d;"></div>
<svg style="left:14px;top:685.5px" width="236" height="12" viewBox="0 0 236 12"><path d="M10 2.6v6.8L5.3 6z" fill="#fff"/><path d="M226 2.6v6.8l4.7-3.4z" fill="#fff"/><path d="M89.5 3.5v5M92 3.5v5M94.5 3.5v5M97 3.5v5" stroke="#fff" stroke-width="0.8"/></svg>
<svg style="left:100px;top:698px" width="45" height="6" viewBox="0 0 45 6"><path d="M4 4.5h5L6.5 1.5z" fill="#2c2d32"/><path d="M24 3.5h1M27 3.5h1M30 3.5h1M33 3.5h1M36 3.5h1" stroke="#c8c8cb" stroke-width="1"/></svg>
<div style="left:254px;top:128px;width:0.8px;height:577px;background:#2e2f34;"></div>
<div style="left:256px;top:128px;width:27px;height:13.6px;background:#97989d;"></div>
<svg style="left:263px;top:128px" width="14" height="14" viewBox="0 0 14 14"><path d="M6.6 6.2V3.8a2.4 2.4 0 0 1 4.8 0v1.1" fill="none" stroke="#fff" stroke-width="1.3"/><rect x="1.8" y="6" width="7.6" height="6.6" fill="#fff"/><rect x="5" y="9.3" width="1.1" height="1.6" fill="#55565e"/></svg>
<div style="left:284.8px;top:128px;width:531.4px;height:14.8px;background:#97989d;"></div>
<div class="t" style="left:288px;top:129.5px;height:12px;line-height:12px;font-size:9.4px;color:#fff;">A</div>
<div class="t" style="left:700px;top:129.5px;height:12px;line-height:12px;font-size:9.4px;color:#fff;width:107.5px;text-align:right;">Пластины</div>
<div class="t" style="left:258px;top:150.0px;height:12px;line-height:12px;font-size:9.25px;color:#fff;font-weight:bold;">Формы и бумага</div>
<div style="left:336px;top:155.2px;width:478.5px;height:1.2px;background:#6c6d74;"></div>
<div style="left:258px;top:165px;width:526.3px;height:250.4px;border:1.200px solid #6c6d74;"></div>
<div class="t" style="left:259px;top:167.4px;height:12px;line-height:12px;font-size:9.25px;color:#fff;font-weight:bold;">Список выбранных форм</div>
<div style="left:259.2px;top:181px;width:524px;height:16.4px;background:#ff8c00;"></div>
<div class="t" style="left:264.5px;top:184.0px;height:12px;line-height:12px;font-size:9.5px;color:#0c0800;"># 1: SM 74_Diamant_NEW - DIMA (Печать с чужим оборотом (лицо и оборот))</div>
<div style="left:789px;top:165px;width:24.2px;height:16px;background:#97989d;"></div>
<div style="left:806.2px;top:165px;width:0.9px;height:16px;background:#dcdcde;"></div>
<svg style="left:808px;top:169.5px" width="5" height="7" viewBox="0 0 5 7"><path d="M0.6 0.5L4 3.5 0.6 6.5z" fill="#fff"/></svg>
<svg style="left:791px;top:166.2px" width="14" height="14" viewBox="0 0 14 14"><path d="M1.300 2h3.600l1 1.100h5.200v6.300h-9.800z" fill="none" stroke="#fff" stroke-width="1.050"/><path d="M6 9.400v3.100h6.600" fill="none" stroke="#fff" stroke-width="1.050"/><path d="M4.400 11.300L6 9.600 7.600 11.300" fill="none" stroke="#fff" stroke-width="0.900"/></svg>
<div style="left:789px;top:184.5px;width:24.2px;height:16px;background:#97989d;"></div>
<div style="left:806.2px;top:184.5px;width:0.9px;height:16px;background:#dcdcde;"></div>
<svg style="left:808px;top:189.0px" width="5" height="7" viewBox="0 0 5 7"><path d="M0.6 0.5L4 3.5 0.6 6.5z" fill="#fff"/></svg>
<svg style="left:791px;top:185.5px" width="14" height="14" viewBox="0 0 14 14"><path d="M9.8 4.6A3.6 3.6 0 0 0 3.4 6.2M3.8 9.4a3.6 3.6 0 0 0 6.4-1.6" fill="none" stroke="#fff" stroke-width="1.7"/><path d="M8.2 1.2l3.4 3-4.2 1.4zM5.6 12.8l-3.4-3 4.2-1.4z" fill="#fff"/></svg>
<div style="left:789px;top:208.7px;width:24.2px;height:16px;background:#97989d;"></div>
<div style="left:806.2px;top:208.7px;width:0.9px;height:16px;background:#dcdcde;"></div>
<svg style="left:808px;top:213.2px" width="5" height="7" viewBox="0 0 5 7"><path d="M0.6 0.5L4 3.5 0.6 6.5z" fill="#fff"/></svg>
<svg style="left:791px;top:209.7px" width="14" height="14" viewBox="0 0 14 14"><path d="M2.600 2.200h4.800M2.600 2.200v7.400M8.600 2.200h1.600v1.600" fill="none" stroke="#fff" stroke-width="1" stroke-dasharray="1.600 0.800"/><path d="M5.800 4.800h4.600v5h-4.600z" fill="none" stroke="#e8e8ea" stroke-width="0.900"/><path d="M6 10.600v2.200h5.800" fill="none" stroke="#fff" stroke-width="1.050"/><path d="M4.500 12L6 10.400 7.500 12" fill="none" stroke="#fff" stroke-width="0.900"/></svg>
<div style="left:789px;top:233px;width:24.2px;height:16px;background:#97989d;"></div>
<svg style="left:794px;top:234px" width="14" height="14" viewBox="0 0 14 14"><path d="M3 4.2h8M5.5 4V2.6h3V4M4 4.6v7.2h6V4.6M5.8 6.4v3.8M7 6.4v3.8M8.2 6.4v3.8" fill="none" stroke="#fff" stroke-width="1"/></svg>
<div style="left:789px;top:546px;width:24.2px;height:16px;background:#97989d;"></div>
<div style="left:806.2px;top:546px;width:0.9px;height:16px;background:#dcdcde;"></div>
<svg style="left:808px;top:550.5px" width="5" height="7" viewBox="0 0 5 7"><path d="M0.6 0.5L4 3.5 0.6 6.5z" fill="#fff"/></svg>
<svg style="left:791px;top:547.2px" width="14" height="14" viewBox="0 0 14 14"><path d="M1.300 2h3.600l1 1.100h5.200v6.300h-9.800z" fill="none" stroke="#fff" stroke-width="1.050"/><path d="M6 9.400v3.100h6.600" fill="none" stroke="#fff" stroke-width="1.050"/><path d="M4.400 11.300L6 9.600 7.600 11.300" fill="none" stroke="#fff" stroke-width="0.900"/></svg>
<div style="left:789px;top:587px;width:24.2px;height:16px;background:#97989d;"></div>
<div style="left:806.2px;top:587px;width:0.9px;height:16px;background:#dcdcde;"></div>
<svg style="left:808px;top:591.5px" width="5" height="7" viewBox="0 0 5 7"><path d="M0.6 0.5L4 3.5 0.6 6.5z" fill="#fff"/></svg>
<svg style="left:791px;top:588.2px" width="14" height="14" viewBox="0 0 14 14"><path d="M1.300 2h3.600l1 1.100h5.200v6.300h-9.800z" fill="none" stroke="#fff" stroke-width="1.050"/><path d="M6 9.400v3.100h6.600" fill="none" stroke="#fff" stroke-width="1.050"/><path d="M4.400 11.300L6 9.600 7.600 11.300" fill="none" stroke="#fff" stroke-width="0.900"/></svg>
<div class="t" style="left:258px;top:416.0px;height:12px;line-height:12px;font-size:9.25px;color:#fff;font-weight:bold;">Выбранная форма</div>
<div style="left:347.5px;top:421.2px;width:467.0px;height:1.2px;background:#6c6d74;"></div>
<div class="t" style="left:258px;top:431.5px;height:12px;line-height:12px;font-size:9.55px;color:#fff;">Ширина:</div>
<div class="fld" style="left:376px;top:429.3px;width:165px;height:16.4px;line-height:14.999999999999998px;color:#fff;">745,0</div>
<div class="t" style="left:460.5px;top:431.5px;height:12px;line-height:12px;font-size:9.55px;color:#fff;width:150px;text-align:right;">Высота:</div>
<div class="fld" style="left:618.5px;top:429.3px;width:164.8px;height:16.4px;line-height:14.999999999999998px;color:#fff;">605,0</div>
<div style="left:259.3px;top:452.5px;width:10.3px;height:9.8px;border:1px solid #c3c4c7;background:#4a4b53;"></div>
<svg style="left:259.3px;top:452.5px" width="11" height="10" viewBox="0 0 11 10"><path d="M2.6 4.8L4.6 7 8 2.6" fill="none" stroke="#f0f0f2" stroke-width="1.250"/></svg>
<div class="t" style="left:276px;top:451.5px;height:12px;line-height:12px;font-size:9.55px;color:#fff;">Сборная форма</div>
<div class="t" style="left:460.5px;top:451.2px;height:12px;line-height:12px;font-size:9.55px;color:#fff;width:150px;text-align:right;">Количество:</div>
<div class="fld" style="left:618.5px;top:449px;width:164.8px;height:16.4px;line-height:14.999999999999998px;color:#fff;">18</div>
<div class="t" style="left:258px;top:473.6px;height:12px;line-height:12px;font-size:9.25px;color:#fff;font-weight:bold;">Предписание по раскладке для печати оборота</div>
<div style="left:481px;top:478.8px;width:333.5px;height:1.2px;background:#6c6d74;"></div>
<div class="t" style="left:258px;top:489.0px;height:12px;line-height:12px;font-size:9.55px;color:#fff;">Тип формы:</div>
<div class="fld" style="left:376px;top:487.3px;width:407.3px;height:15.6px;line-height:13.399999999999999px;padding-left:6px;background:#585961;">Печать с чужим оборотом (лицо и оборот)</div>
<div style="left:770.8px;top:488.1px;width:11.7px;height:14.0px;background:#97989d;"></div>
<svg style="left:772.8px;top:493.1px" width="8" height="5" viewBox="0 0 8 5"><path d="M0.4 0.5h7.2L4 4.4z" fill="#fff"/></svg>
<div class="t" style="left:258px;top:508.5px;height:12px;line-height:12px;font-size:9.65px;color:#8b8c92;">Расстояние разделения:</div>
<div class="fld" style="left:376px;top:506.5px;width:165px;height:16.4px;line-height:14.999999999999998px;color:#a6a7ac;">0,0</div>
<div class="t" style="left:258px;top:531.6px;height:12px;line-height:12px;font-size:9.25px;color:#fff;font-weight:bold;">Определение бумаги для производства</div>
<div style="left:444.5px;top:536.8000000000001px;width:370.0px;height:1.2px;background:#6c6d74;"></div>
<div class="t" style="left:258px;top:548.5px;height:12px;line-height:12px;font-size:9.55px;color:#fff;">Имя:</div>
<div class="fld" style="left:378px;top:546.2px;width:294.5px;height:16px;line-height:14.6px;color:#fff;">??</div>
<div style="left:679px;top:549.3px;width:10.3px;height:9.8px;border:1px solid #c3c4c7;background:#4a4b53;"></div>
<div class="t" style="left:695px;top:548.5px;height:12px;line-height:12px;font-size:9.55px;color:#fff;">Сохранить формат</div>
<div style="left:259.3px;top:571px;width:10.3px;height:9.8px;border:1px solid #c3c4c7;background:#4a4b53;"></div>
<div class="t" style="left:276px;top:570.0px;height:12px;line-height:12px;font-size:9.55px;color:#fff;">Переменная ширина полотна</div>
<div class="fld" style="left:559px;top:567.7px;width:224.3px;height:15.6px;line-height:13.399999999999999px;padding-left:6px;background:#585961;">Рулон 1</div>
<div style="left:770.8px;top:568.5px;width:11.7px;height:14.0px;background:#97989d;"></div>
<svg style="left:772.8px;top:573.5px" width="8" height="5" viewBox="0 0 8 5"><path d="M0.4 0.5h7.2L4 4.4z" fill="#fff"/></svg>
<div class="t" style="left:258px;top:589.0px;height:12px;line-height:12px;font-size:9.55px;color:#fff;">Ширина:</div>
<div class="fld" style="left:376px;top:587px;width:165px;height:16.4px;line-height:14.999999999999998px;color:#fff;">718,0</div>
<div class="t" style="left:558px;top:589.0px;height:12px;line-height:12px;font-size:9.55px;color:#fff;">Высота:</div>
<div class="fld" style="left:618.5px;top:587px;width:164.8px;height:16.4px;line-height:14.999999999999998px;color:#fff;">518,0</div>
<div class="t" style="left:258px;top:608.8px;height:12px;line-height:12px;font-size:9.55px;color:#fff;">Грамматура:</div>
<div class="fld" style="left:376px;top:606.5px;width:165px;height:16.4px;line-height:14.999999999999998px;color:#fff;">135,0</div>
<div class="t" style="left:558px;top:608.8px;height:12px;line-height:12px;font-size:9.55px;color:#fff;">Толщина:</div>
<div class="fld" style="left:618.5px;top:606.5px;width:164.8px;height:16.4px;line-height:14.999999999999998px;color:#fff;">0,12</div>
<div class="t" style="left:258px;top:628.4px;height:12px;line-height:12px;font-size:9.55px;color:#fff;">Смещение по центру:</div>
<div class="fld" style="left:376px;top:626px;width:165px;height:16.4px;line-height:14.999999999999998px;color:#fff;">0,0</div>
<div class="t" style="left:258px;top:651.0px;height:12px;line-height:12px;font-size:9.25px;color:#fff;font-weight:bold;">Позиция запечатываемой области на бумаге</div>
<div style="left:467px;top:656.2px;width:347.5px;height:1.2px;background:#6c6d74;"></div>
<div style="left:259.7px;top:668px;width:10.3px;height:9.8px;border:1px solid #8f9096;background:#4a4b53;"></div>
<svg style="left:259.7px;top:668px" width="11" height="10" viewBox="0 0 11 10"><path d="M2.6 4.8L4.6 7 8 2.6" fill="none" stroke="#b4b5b9" stroke-width="1.250"/></svg>
<div class="t" style="left:277px;top:667.0px;height:12px;line-height:12px;font-size:9.65px;color:#8b8c92;">Автоматическая позиция запечатываемой области</div>
<div style="left:520.8px;top:668px;width:10.3px;height:9.8px;border:1px solid #8f9096;background:#4a4b53;"></div>
<div class="t" style="left:537.5px;top:667.0px;height:12px;line-height:12px;font-size:9.65px;color:#8b8c92;">Позиция запечатываемой области по центру</div>
<div class="t" style="left:258px;top:684.6px;height:12px;line-height:12px;font-size:9.65px;color:#8b8c92;">Расстояние внизу:</div>
<div class="fld" style="left:376px;top:682.6px;width:165px;height:16px;line-height:14.6px;color:#a6a7ac;">12,0</div>
<div class="t" style="left:460.5px;top:684.6px;height:12px;line-height:12px;font-size:9.65px;color:#8b8c92;width:150px;text-align:right;">Слева:</div>
<div class="fld" style="left:618.5px;top:682.6px;width:164.8px;height:16px;line-height:14.6px;color:#a6a7ac;">0,0</div>
<div style="left:817.9px;top:128px;width:4px;height:577px;background:#9a9ba0;"></div>
<div style="left:821.9px;top:128px;width:0.8px;height:577px;background:#2e2f34;"></div>
<svg style="left:817px;top:380px" width="6" height="66" viewBox="0 0 6 66"><path d="M4.800 7.600v5.600L1.400 10.400z" fill="#34353b"/><path d="M3.600 30h0M3.600 32.600h0M3.600 35.200h0M3.600 37.800h0M3.600 40.400h0" stroke="#e0e0e2" stroke-width="1" stroke-linecap="square"/><path d="M1.600 57.200v5.600l3.400-2.800z" fill="#34353b"/></svg>
<svg style="left:249.200px;top:380px" width="6" height="66" viewBox="0 0 6 66"><path d="M4.800 7.600v5.600L1.400 10.400z" fill="#34353b"/><path d="M3.600 30h0M3.600 32.600h0M3.600 35.200h0M3.600 37.800h0M3.600 40.400h0" stroke="#e0e0e2" stroke-width="1" stroke-linecap="square"/><path d="M1.600 57.200v5.600l3.400-2.800z" fill="#34353b"/></svg>
<svg style="left:720px;top:698px" width="70" height="7" viewBox="0 0 70 7"><path d="M3 5.5h5L5.5 2.5z" fill="#2c2d32"/><path d="M24 4h1M27 4h1M30 4h1M33 4h1M36 4h1" stroke="#c8c8cb" stroke-width="1"/><path d="M53 3h5L55.5 6z" fill="#2c2d32"/></svg>
<div style="left:825.8px;top:128px;width:647.2px;height:14.8px;background:#97989d;"></div>
<div class="t" style="left:828px;top:129.5px;height:12px;line-height:12px;font-size:9.6px;color:#fff;">Без названия / Компонент работы: A</div>
<div class="t" style="left:1380px;top:129.5px;height:12px;line-height:12px;font-size:9.6px;color:#fff;width:88px;text-align:right;">Графика</div>
<div style="left:1475px;top:128px;width:13px;height:14.8px;background:#97989d;"></div>
<svg style="left:1474px;top:128px" width="14" height="15" viewBox="0 0 14 15"><path d="M3.5 3.8l7 7.4M10.5 3.8l-7 7.4" stroke="#fff" stroke-width="1.1"/></svg>
<div style="left:826px;top:145.6px;width:94px;height:1px;background:#6c6d74;"></div>
<div style="left:920px;top:145.6px;width:1.6px;height:15.8px;background:#2f3035;"></div>
<div class="t" style="left:826px;top:147.8px;height:12px;line-height:12px;font-size:9.3px;color:#f7931e;font-weight:bold;width:94px;text-align:center;">Печатный лист</div>
<div style="left:921.7px;top:145.6px;width:79.29999999999995px;height:15.8px;background:#63646c;border-top:1px solid #7c7d84;"></div>
<div style="left:1001px;top:145.6px;width:1.6px;height:15.8px;background:#2f3035;"></div>
<div class="t" style="left:921.7px;top:147.8px;height:12px;line-height:12px;font-size:9.3px;color:#fff;font-weight:bold;width:79.29999999999995px;text-align:center;">Фальц-лист</div>
<div style="left:1002.6px;top:145.6px;width:87.39999999999998px;height:15.8px;background:#63646c;border-top:1px solid #7c7d84;"></div>
<div style="left:1090px;top:145.6px;width:1.6px;height:15.8px;background:#2f3035;"></div>
<div class="t" style="left:1002.6px;top:147.8px;height:12px;line-height:12px;font-size:9.3px;color:#fff;font-weight:bold;width:87.39999999999998px;text-align:center;">Список полос</div>
<div style="left:1091.6px;top:145.6px;width:138.4000000000001px;height:15.8px;background:#63646c;border-top:1px solid #7c7d84;"></div>
<div style="left:1230px;top:145.6px;width:1.6px;height:15.8px;background:#2f3035;"></div>
<div class="t" style="left:1091.6px;top:147.8px;height:12px;line-height:12px;font-size:9.3px;color:#fff;font-weight:bold;width:138.4000000000001px;text-align:center;">Список печатных листов</div>
<div style="left:1231.6px;top:145.6px;width:67.40000000000009px;height:15.8px;background:#63646c;border-top:1px solid #7c7d84;"></div>
<div style="left:1299px;top:145.6px;width:1.6px;height:15.8px;background:#2f3035;"></div>
<div class="t" style="left:1231.6px;top:147.8px;height:12px;line-height:12px;font-size:9.3px;color:#fff;font-weight:bold;width:67.40000000000009px;text-align:center;">Документ</div>
<div style="left:825.8px;top:161.8px;width:315.4px;height:14px;background:#c5b931;"></div>
<div class="t" style="left:827px;top:163.9px;height:12px;line-height:12px;font-size:9.55px;color:#181400;width:313.5px;">ЛИЦО:&nbsp; Печатный лист 1 (Печать с чужим оборотом (лицо и оборот))</div>
<div style="left:1141.2px;top:161.8px;width:13.5px;height:14px;background:#3aa53e;"></div>
<svg style="left:1144px;top:165px" width="6" height="8" viewBox="0 0 6 8"><path d="M1 0.8L5 4 1 7.2z" fill="#fff"/></svg>
<div style="left:1159.3px;top:161.8px;width:14.6px;height:14px;background:#c9b830;"></div>
<svg style="left:1163.5px;top:165px" width="6" height="8" viewBox="0 0 6 8"><path d="M5 0.8L1 4 5 7.2z" fill="#111"/></svg>
<div style="left:1173.9px;top:161.8px;width:314.1px;height:14px;background:#3aa53e;"></div>
<div class="t" style="left:1174.5px;top:163.9px;height:12px;line-height:12px;font-size:9.48px;color:#fff;width:313.5px;">ОБОРОТ:&nbsp; Печатный лист 1 (Печать с чужим оборотом (лицо и оборо...</div>
<div style="left:1154.6px;top:161.8px;width:2.5px;height:491px;background:#a3a4a9;"></div>
<div style="left:1157.1px;top:161.8px;width:1.6px;height:491px;background:#83848a;"></div>
<div style="left:1158.7px;top:161.8px;width:1px;height:491px;background:#3a3b41;"></div>
<svg style="left:1154px;top:376px" width="6" height="62" viewBox="0 0 6 62"><path d="M4.400 3.500v5L1.400 6z" fill="#55565e"/><path d="M3 26h0M3 28.500h0M3 31h0M3 33.500h0M3 36h0" stroke="#dcdcde" stroke-width="1" stroke-linecap="square"/><path d="M1.400 53.500v5l3-2.500z" fill="#55565e"/></svg>
<div style="left:841.0px;top:191.2px;width:313.5999999999999px;height:461.59999999999997px;background:#a5a5a5;"></div>
<div style="left:827.0px;top:177.6px;width:12px;height:11.7px;background:#7a7b83;"></div>
<svg style="left:827.0px;top:177.400px" width="12.300" height="12.200" viewBox="0 0 12.3 12.2"><path d="M6.1 1v10.2M1 6.1h10.3" stroke="#fff" stroke-width="1.1"/></svg>
<svg style="left:841.0px;top:176px" width="313.5999999999999" height="15" viewBox="0 0 313.5999999999999 15" font-family="Liberation Sans, sans-serif" font-size="7.700" fill="#e6e6e8" stroke="#e6e6e8" stroke-width="0.200"><path d="M0.45 11v2 M4.42 11v2 M8.40 7.800v5.200 M12.38 11v2 M16.35 11v2 M20.33 11v2 M24.31 11v2 M28.28 9.600v3.400 M32.26 11v2 M36.24 11v2 M40.22 11v2 M44.19 11v2 M48.17 7.800v5.200 M52.15 11v2 M56.12 11v2 M60.10 11v2 M64.08 11v2 M68.05 9.600v3.400 M72.03 11v2 M76.01 11v2 M79.99 11v2 M83.96 11v2 M87.94 7.800v5.200 M91.92 11v2 M95.89 11v2 M99.87 11v2 M103.85 11v2 M107.82 9.600v3.400 M111.80 11v2 M115.78 11v2 M119.76 11v2 M123.73 11v2 M127.71 7.800v5.200 M131.69 11v2 M135.66 11v2 M139.64 11v2 M143.62 11v2 M147.60 9.600v3.400 M151.57 11v2 M155.55 11v2 M159.53 11v2 M163.50 11v2 M167.48 7.800v5.200 M171.46 11v2 M175.43 11v2 M179.41 11v2 M183.39 11v2 M187.37 9.600v3.400 M191.34 11v2 M195.32 11v2 M199.30 11v2 M203.27 11v2 M207.25 7.800v5.200 M211.23 11v2 M215.20 11v2 M219.18 11v2 M223.16 11v2 M227.13 9.600v3.400 M231.11 11v2 M235.09 11v2 M239.07 11v2 M243.04 11v2 M247.02 7.800v5.200 M251.00 11v2 M254.97 11v2 M258.95 11v2 M262.93 11v2 M266.90 9.600v3.400 M270.88 11v2 M274.86 11v2 M278.84 11v2 M282.81 11v2 M286.79 7.800v5.200 M290.77 11v2 M294.74 11v2 M298.72 11v2 M302.70 11v2 M306.67 9.600v3.400 M310.65 11v2" stroke="#f0f0f0" stroke-width="0.900"/><text x="7.20" y="7.200" text-anchor="middle">0.0</text><text x="48.17" y="7.200" text-anchor="middle">100</text><text x="87.94" y="7.200" text-anchor="middle">200</text><text x="127.71" y="7.200" text-anchor="middle">300</text><text x="167.48" y="7.200" text-anchor="middle">400</text><text x="207.25" y="7.200" text-anchor="middle">500</text><text x="247.02" y="7.200" text-anchor="middle">600</text><text x="286.79" y="7.200" text-anchor="middle">700</text><path d="M6.80 1.2h3.2l-1.6 2z" fill="#fff"/></svg>
<svg style="left:825.8px;top:191.2px" width="15" height="461.59999999999997" viewBox="0 0 15 461.59999999999997" font-family="Liberation Sans, sans-serif" font-size="7.7" fill="#fff"><path d="M11.100 459.49h2 M11.100 455.50h2 M9.800 451.50h3.300 M11.100 447.50h2 M11.100 443.51h2 M11.100 439.51h2 M11.100 435.52h2 M8.100 431.52h5 M11.100 427.52h2 M11.100 423.53h2 M11.100 419.53h2 M11.100 415.54h2 M9.800 411.54h3.300 M11.100 407.54h2 M11.100 403.55h2 M11.100 399.55h2 M11.100 395.56h2 M8.100 391.56h5 M11.100 387.56h2 M11.100 383.57h2 M11.100 379.57h2 M11.100 375.58h2 M9.800 371.58h3.300 M11.100 367.58h2 M11.100 363.59h2 M11.100 359.59h2 M11.100 355.60h2 M8.100 351.60h5 M11.100 347.60h2 M11.100 343.61h2 M11.100 339.61h2 M11.100 335.62h2 M9.800 331.62h3.300 M11.100 327.62h2 M11.100 323.63h2 M11.100 319.63h2 M11.100 315.64h2 M8.100 311.64h5 M11.100 307.64h2 M11.100 303.65h2 M11.100 299.65h2 M11.100 295.66h2 M9.800 291.66h3.300 M11.100 287.66h2 M11.100 283.67h2 M11.100 279.67h2 M11.100 275.68h2 M8.100 271.68h5 M11.100 267.68h2 M11.100 263.69h2 M11.100 259.69h2 M11.100 255.70h2 M9.800 251.70h3.300 M11.100 247.70h2 M11.100 243.71h2 M11.100 239.71h2 M11.100 235.72h2 M8.100 231.72h5 M11.100 227.72h2 M11.100 223.73h2 M11.100 219.73h2 M11.100 215.74h2 M9.800 211.74h3.300 M11.100 207.74h2 M11.100 203.75h2 M11.100 199.75h2 M11.100 195.76h2 M8.100 191.76h5 M11.100 187.76h2 M11.100 183.77h2 M11.100 179.77h2 M11.100 175.78h2 M9.800 171.78h3.300 M11.100 167.78h2 M11.100 163.79h2 M11.100 159.79h2 M11.100 155.80h2 M8.100 151.80h5 M11.100 147.80h2 M11.100 143.81h2 M11.100 139.81h2 M11.100 135.82h2 M9.800 131.82h3.300 M11.100 127.82h2 M11.100 123.83h2 M11.100 119.83h2 M11.100 115.84h2 M8.100 111.84h5 M11.100 107.84h2 M11.100 103.85h2 M11.100 99.85h2 M11.100 95.86h2 M9.800 91.86h3.300 M11.100 87.86h2 M11.100 83.87h2 M11.100 79.87h2 M11.100 75.88h2 M8.100 71.88h5 M11.100 67.88h2 M11.100 63.89h2 M11.100 59.89h2 M11.100 55.90h2 M9.800 51.90h3.300 M11.100 47.90h2 M11.100 43.91h2 M11.100 39.91h2 M11.100 35.92h2 M8.100 31.92h5 M11.100 27.92h2 M11.100 23.93h2 M11.100 19.93h2 M11.100 15.94h2 M9.800 11.94h3.300 M11.100 7.94h2 M11.100 3.95h2" stroke="#f0f0f0" stroke-width="0.9"/><text transform="translate(6.300 433.22) rotate(-90)" text-anchor="middle" font-size="8.300">-200</text><text transform="translate(6.300 393.26) rotate(-90)" text-anchor="middle" font-size="8.300">-100</text><text transform="translate(6.300 352.40) rotate(-90)" text-anchor="middle" font-size="8.300">0.0</text><text transform="translate(6.300 312.44) rotate(-90)" text-anchor="middle" font-size="8.300">100</text><text transform="translate(6.300 272.48) rotate(-90)" text-anchor="middle" font-size="8.300">200</text><text transform="translate(6.300 232.52) rotate(-90)" text-anchor="middle" font-size="8.300">300</text><text transform="translate(6.300 192.56) rotate(-90)" text-anchor="middle" font-size="8.300">400</text><text transform="translate(6.300 152.60) rotate(-90)" text-anchor="middle" font-size="8.300">500</text><text transform="translate(6.300 112.64) rotate(-90)" text-anchor="middle" font-size="8.300">600</text><text transform="translate(6.300 72.68) rotate(-90)" text-anchor="middle" font-size="8.300">700</text><text transform="translate(6.300 32.72) rotate(-90)" text-anchor="middle" font-size="8.300">800</text></svg>
<div style="left:1175.2px;top:191.2px;width:312.79999999999995px;height:461.59999999999997px;background:#a5a5a5;"></div>
<div style="left:1161.2px;top:177.6px;width:12px;height:11.7px;background:#7a7b83;"></div>
<svg style="left:1161.2px;top:177.400px" width="12.300" height="12.200" viewBox="0 0 12.3 12.2"><path d="M6.1 1v10.2M1 6.1h10.3" stroke="#fff" stroke-width="1.1"/></svg>
<svg style="left:1175.2px;top:176px" width="312.79999999999995" height="15" viewBox="0 0 312.79999999999995 15" font-family="Liberation Sans, sans-serif" font-size="7.700" fill="#e6e6e8" stroke="#e6e6e8" stroke-width="0.200"><path d="M3.62 11v2 M7.60 7.800v5.200 M11.58 11v2 M15.55 11v2 M19.53 11v2 M23.51 11v2 M27.48 9.600v3.400 M31.46 11v2 M35.44 11v2 M39.42 11v2 M43.39 11v2 M47.37 7.800v5.200 M51.35 11v2 M55.32 11v2 M59.30 11v2 M63.28 11v2 M67.25 9.600v3.400 M71.23 11v2 M75.21 11v2 M79.19 11v2 M83.16 11v2 M87.14 7.800v5.200 M91.12 11v2 M95.09 11v2 M99.07 11v2 M103.05 11v2 M107.02 9.600v3.400 M111.00 11v2 M114.98 11v2 M118.96 11v2 M122.93 11v2 M126.91 7.800v5.200 M130.89 11v2 M134.86 11v2 M138.84 11v2 M142.82 11v2 M146.79 9.600v3.400 M150.77 11v2 M154.75 11v2 M158.73 11v2 M162.70 11v2 M166.68 7.800v5.200 M170.66 11v2 M174.63 11v2 M178.61 11v2 M182.59 11v2 M186.56 9.600v3.400 M190.54 11v2 M194.52 11v2 M198.50 11v2 M202.47 11v2 M206.45 7.800v5.200 M210.43 11v2 M214.40 11v2 M218.38 11v2 M222.36 11v2 M226.33 9.600v3.400 M230.31 11v2 M234.29 11v2 M238.27 11v2 M242.24 11v2 M246.22 7.800v5.200 M250.20 11v2 M254.17 11v2 M258.15 11v2 M262.13 11v2 M266.10 9.600v3.400 M270.08 11v2 M274.06 11v2 M278.04 11v2 M282.01 11v2 M285.99 7.800v5.200 M289.97 11v2 M293.94 11v2 M297.92 11v2 M301.90 11v2 M305.87 9.600v3.400 M309.85 11v2" stroke="#f0f0f0" stroke-width="0.900"/><text x="6.40" y="7.200" text-anchor="middle">0.0</text><text x="47.37" y="7.200" text-anchor="middle">100</text><text x="87.14" y="7.200" text-anchor="middle">200</text><text x="126.91" y="7.200" text-anchor="middle">300</text><text x="166.68" y="7.200" text-anchor="middle">400</text><text x="206.45" y="7.200" text-anchor="middle">500</text><text x="246.22" y="7.200" text-anchor="middle">600</text><text x="285.99" y="7.200" text-anchor="middle">700</text><path d="M6.00 1.2h3.2l-1.6 2z" fill="#fff"/></svg>
<svg style="left:1160px;top:191.2px" width="15" height="461.59999999999997" viewBox="0 0 15 461.59999999999997" font-family="Liberation Sans, sans-serif" font-size="7.7" fill="#fff"><path d="M11.100 459.49h2 M11.100 455.50h2 M9.800 451.50h3.300 M11.100 447.50h2 M11.100 443.51h2 M11.100 439.51h2 M11.100 435.52h2 M8.100 431.52h5 M11.100 427.52h2 M11.100 423.53h2 M11.100 419.53h2 M11.100 415.54h2 M9.800 411.54h3.300 M11.100 407.54h2 M11.100 403.55h2 M11.100 399.55h2 M11.100 395.56h2 M8.100 391.56h5 M11.100 387.56h2 M11.100 383.57h2 M11.100 379.57h2 M11.100 375.58h2 M9.800 371.58h3.300 M11.100 367.58h2 M11.100 363.59h2 M11.100 359.59h2 M11.100 355.60h2 M8.100 351.60h5 M11.100 347.60h2 M11.100 343.61h2 M11.100 339.61h2 M11.100 335.62h2 M9.800 331.62h3.300 M11.100 327.62h2 M11.100 323.63h2 M11.100 319.63h2 M11.100 315.64h2 M8.100 311.64h5 M11.100 307.64h2 M11.100 303.65h2 M11.100 299.65h2 M11.100 295.66h2 M9.800 291.66h3.300 M11.100 287.66h2 M11.100 283.67h2 M11.100 279.67h2 M11.100 275.68h2 M8.100 271.68h5 M11.100 267.68h2 M11.100 263.69h2 M11.100 259.69h2 M11.100 255.70h2 M9.800 251.70h3.300 M11.100 247.70h2 M11.100 243.71h2 M11.100 239.71h2 M11.100 235.72h2 M8.100 231.72h5 M11.100 227.72h2 M11.100 223.73h2 M11.100 219.73h2 M11.100 215.74h2 M9.800 211.74h3.300 M11.100 207.74h2 M11.100 203.75h2 M11.100 199.75h2 M11.100 195.76h2 M8.100 191.76h5 M11.100 187.76h2 M11.100 183.77h2 M11.100 179.77h2 M11.100 175.78h2 M9.800 171.78h3.300 M11.100 167.78h2 M11.100 163.79h2 M11.100 159.79h2 M11.100 155.80h2 M8.100 151.80h5 M11.100 147.80h2 M11.100 143.81h2 M11.100 139.81h2 M11.100 135.82h2 M9.800 131.82h3.300 M11.100 127.82h2 M11.100 123.83h2 M11.100 119.83h2 M11.100 115.84h2 M8.100 111.84h5 M11.100 107.84h2 M11.100 103.85h2 M11.100 99.85h2 M11.100 95.86h2 M9.800 91.86h3.300 M11.100 87.86h2 M11.100 83.87h2 M11.100 79.87h2 M11.100 75.88h2 M8.100 71.88h5 M11.100 67.88h2 M11.100 63.89h2 M11.100 59.89h2 M11.100 55.90h2 M9.800 51.90h3.300 M11.100 47.90h2 M11.100 43.91h2 M11.100 39.91h2 M11.100 35.92h2 M8.100 31.92h5 M11.100 27.92h2 M11.100 23.93h2 M11.100 19.93h2 M11.100 15.94h2 M9.800 11.94h3.300 M11.100 7.94h2 M11.100 3.95h2" stroke="#f0f0f0" stroke-width="0.9"/><text transform="translate(6.300 433.22) rotate(-90)" text-anchor="middle" font-size="8.300">-200</text><text transform="translate(6.300 393.26) rotate(-90)" text-anchor="middle" font-size="8.300">-100</text><text transform="translate(6.300 352.40) rotate(-90)" text-anchor="middle" font-size="8.300">0.0</text><text transform="translate(6.300 312.44) rotate(-90)" text-anchor="middle" font-size="8.300">100</text><text transform="translate(6.300 272.48) rotate(-90)" text-anchor="middle" font-size="8.300">200</text><text transform="translate(6.300 232.52) rotate(-90)" text-anchor="middle" font-size="8.300">300</text><text transform="translate(6.300 192.56) rotate(-90)" text-anchor="middle" font-size="8.300">400</text><text transform="translate(6.300 152.60) rotate(-90)" text-anchor="middle" font-size="8.300">500</text><text transform="translate(6.300 112.64) rotate(-90)" text-anchor="middle" font-size="8.300">600</text><text transform="translate(6.300 72.68) rotate(-90)" text-anchor="middle" font-size="8.300">700</text><text transform="translate(6.300 32.72) rotate(-90)" text-anchor="middle" font-size="8.300">800</text></svg>
<svg style="left:849.3px;top:301.7px" width="298.4" height="242.8" viewBox="0 0 298.4 242.8" font-family="Liberation Sans, sans-serif"><rect x="0" y="0" width="297.4" height="241.8" fill="#dadada"/><rect x="5" y="18.6" width="287.3" height="198.2" fill="#f0f0f0"/><rect x="5" y="217.3" width="287.3" height="3.7" fill="#d99a9a"/><rect x="5" y="216.300" width="287.300" height="1" fill="#1c1cf0"/><g transform="translate(5.4 14.9)"><rect x="0.00" y="0" width="1.40" height="3.500" fill="#333"/><rect x="1.30" y="0" width="1.40" height="3.500" fill="#8a8a8a"/><rect x="2.60" y="0" width="1.40" height="3.500" fill="#ee3aa3"/><rect x="3.90" y="0" width="1.40" height="3.500" fill="#f06a6a"/><rect x="5.20" y="0" width="1.40" height="3.500" fill="#ee3aa3"/><rect x="6.50" y="0" width="1.40" height="3.500" fill="#fff45a"/><rect x="7.80" y="0" width="1.40" height="3.500" fill="#fff45a"/><rect x="9.10" y="0" width="1.40" height="3.500" fill="#ee3aa3"/><rect x="10.40" y="0" width="1.40" height="3.500" fill="#ee3aa3"/><rect x="11.70" y="0" width="1.40" height="3.500" fill="#35bdf0"/><rect x="13.00" y="0" width="1.40" height="3.500" fill="#ee3aa3"/><rect x="14.30" y="0" width="1.40" height="3.500" fill="#e8e8e8"/><rect x="15.60" y="0" width="1.40" height="3.500" fill="#e8e8e8"/><rect x="16.90" y="0" width="1.40" height="3.500" fill="#8a8a8a"/><rect x="18.20" y="0" width="1.40" height="3.500" fill="#6a6ad0"/><rect x="19.50" y="0" width="1.40" height="3.500" fill="#6a6ad0"/><rect x="20.80" y="0" width="1.40" height="3.500" fill="#35bdf0"/><rect x="22.10" y="0" width="1.40" height="3.500" fill="#333"/><rect x="23.40" y="0" width="1.40" height="3.500" fill="#e8e8e8"/><rect x="24.70" y="0" width="1.40" height="3.500" fill="#e8e8e8"/><rect x="26.00" y="0" width="1.40" height="3.500" fill="#35bdf0"/><rect x="27.30" y="0" width="1.40" height="3.500" fill="#8a8a8a"/><rect x="28.60" y="0" width="1.40" height="3.500" fill="#6a6ad0"/><rect x="29.90" y="0" width="1.40" height="3.500" fill="#fff45a"/><rect x="31.20" y="0" width="1.40" height="3.500" fill="#5ac08a"/><rect x="32.50" y="0" width="1.40" height="3.500" fill="#ee3aa3"/><rect x="33.80" y="0" width="1.40" height="3.500" fill="#8a8a8a"/><rect x="35.10" y="0" width="1.40" height="3.500" fill="#333"/><rect x="36.40" y="0" width="1.40" height="3.500" fill="#e8e8e8"/><rect x="37.70" y="0" width="1.40" height="3.500" fill="#35bdf0"/><rect x="39.00" y="0" width="1.40" height="3.500" fill="#5ac08a"/><rect x="40.30" y="0" width="1.40" height="3.500" fill="#555"/><rect x="41.60" y="0" width="1.40" height="3.500" fill="#6a6ad0"/><rect x="42.90" y="0" width="1.40" height="3.500" fill="#8a8a8a"/><rect x="44.20" y="0" width="1.40" height="3.500" fill="#6a6ad0"/><rect x="45.50" y="0" width="1.40" height="3.500" fill="#8a8a8a"/><rect x="46.80" y="0" width="1.40" height="3.500" fill="#333"/><rect x="48.10" y="0" width="1.40" height="3.500" fill="#fff45a"/><rect x="49.40" y="0" width="1.40" height="3.500" fill="#8a8a8a"/><rect x="50.70" y="0" width="1.40" height="3.500" fill="#8a8a8a"/><rect x="52.00" y="0" width="1.40" height="3.500" fill="#555"/><rect x="53.30" y="0" width="1.40" height="3.500" fill="#5ac08a"/><rect x="54.60" y="0" width="1.40" height="3.500" fill="#f06a6a"/><rect x="55.90" y="0" width="1.40" height="3.500" fill="#5ac08a"/><rect x="57.20" y="0" width="1.40" height="3.500" fill="#5ac08a"/><rect x="58.50" y="0" width="1.40" height="3.500" fill="#e8e8e8"/><rect x="59.80" y="0" width="1.40" height="3.500" fill="#35bdf0"/><rect x="61.10" y="0" width="1.40" height="3.500" fill="#ee3aa3"/><rect x="62.40" y="0" width="1.40" height="3.500" fill="#5ac08a"/><rect x="63.70" y="0" width="1.40" height="3.500" fill="#d0d0d0"/><rect x="65.00" y="0" width="1.40" height="3.500" fill="#35bdf0"/><rect x="66.30" y="0" width="1.40" height="3.500" fill="#555"/><rect x="67.60" y="0" width="1.40" height="3.500" fill="#ee3aa3"/><rect x="68.90" y="0" width="1.40" height="3.500" fill="#e8e8e8"/><rect x="70.20" y="0" width="1.40" height="3.500" fill="#333"/><rect x="71.50" y="0" width="1.40" height="3.500" fill="#fff45a"/><rect x="72.80" y="0" width="1.40" height="3.500" fill="#333"/><rect x="74.10" y="0" width="1.40" height="3.500" fill="#fff45a"/><rect x="75.40" y="0" width="1.40" height="3.500" fill="#8a8a8a"/><rect x="76.70" y="0" width="1.40" height="3.500" fill="#ee3aa3"/><rect x="78.00" y="0" width="1.40" height="3.500" fill="#e8e8e8"/><rect x="79.30" y="0" width="1.40" height="3.500" fill="#5ac08a"/><rect x="80.60" y="0" width="1.40" height="3.500" fill="#5ac08a"/><rect x="81.90" y="0" width="1.40" height="3.500" fill="#e8e8e8"/><rect x="83.20" y="0" width="1.40" height="3.500" fill="#5ac08a"/><rect x="84.50" y="0" width="1.40" height="3.500" fill="#8a8a8a"/><rect x="85.80" y="0" width="1.40" height="3.500" fill="#35bdf0"/><rect x="87.10" y="0" width="1.40" height="3.500" fill="#e8e8e8"/><rect x="88.40" y="0" width="1.40" height="3.500" fill="#8a8a8a"/><rect x="89.70" y="0" width="1.40" height="3.500" fill="#d0d0d0"/><rect x="91.00" y="0" width="1.40" height="3.500" fill="#f06a6a"/><rect x="92.30" y="0" width="1.40" height="3.500" fill="#e8e8e8"/><rect x="93.60" y="0" width="1.40" height="3.500" fill="#8a8a8a"/><rect x="94.90" y="0" width="1.40" height="3.500" fill="#5ac08a"/><rect x="96.20" y="0" width="1.40" height="3.500" fill="#6a6ad0"/><rect x="97.50" y="0" width="1.40" height="3.500" fill="#e8e8e8"/><rect x="98.80" y="0" width="1.40" height="3.500" fill="#333"/><rect x="100.10" y="0" width="1.40" height="3.500" fill="#ee3aa3"/><rect x="101.40" y="0" width="1.40" height="3.500" fill="#ee3aa3"/><rect x="102.70" y="0" width="1.40" height="3.500" fill="#d0d0d0"/><rect x="104.00" y="0" width="1.40" height="3.500" fill="#8a8a8a"/><rect x="105.30" y="0" width="1.40" height="3.500" fill="#ee3aa3"/><rect x="106.60" y="0" width="1.40" height="3.500" fill="#fff45a"/><rect x="107.90" y="0" width="1.40" height="3.500" fill="#fff45a"/><rect x="109.20" y="0" width="1.40" height="3.500" fill="#333"/><rect x="110.50" y="0" width="1.40" height="3.500" fill="#8a8a8a"/><rect x="111.80" y="0" width="1.40" height="3.500" fill="#8a8a8a"/><rect x="113.10" y="0" width="1.40" height="3.500" fill="#5ac08a"/><rect x="114.40" y="0" width="1.40" height="3.500" fill="#6a6ad0"/><rect x="115.70" y="0" width="1.40" height="3.500" fill="#35bdf0"/><rect x="117.00" y="0" width="1.40" height="3.500" fill="#ee3aa3"/><rect x="118.30" y="0" width="1.40" height="3.500" fill="#35bdf0"/><rect x="119.60" y="0" width="1.40" height="3.500" fill="#fff45a"/><rect x="120.90" y="0" width="1.40" height="3.500" fill="#555"/><rect x="122.20" y="0" width="1.40" height="3.500" fill="#8a8a8a"/><rect x="123.50" y="0" width="1.40" height="3.500" fill="#e8e8e8"/><rect x="124.80" y="0" width="1.40" height="3.500" fill="#e8e8e8"/><rect x="126.10" y="0" width="1.40" height="3.500" fill="#555"/><rect x="127.40" y="0" width="1.40" height="3.500" fill="#fff45a"/><rect x="128.70" y="0" width="1.40" height="3.500" fill="#f06a6a"/><rect x="130.00" y="0" width="1.40" height="3.500" fill="#35bdf0"/><rect x="131.30" y="0" width="1.40" height="3.500" fill="#fff45a"/><rect x="132.60" y="0" width="1.40" height="3.500" fill="#555"/><rect x="133.90" y="0" width="1.40" height="3.500" fill="#333"/><rect x="135.20" y="0" width="1.40" height="3.500" fill="#ee3aa3"/><rect x="136.50" y="0" width="1.40" height="3.500" fill="#ee3aa3"/><rect x="137.80" y="0" width="1.40" height="3.500" fill="#e8e8e8"/><rect x="139.10" y="0" width="1.40" height="3.500" fill="#333"/><rect x="140.40" y="0" width="1.40" height="3.500" fill="#555"/><rect x="141.70" y="0" width="1.40" height="3.500" fill="#555"/><rect x="143.00" y="0" width="1.40" height="3.500" fill="#fff45a"/><rect x="144.30" y="0" width="1.40" height="3.500" fill="#8a8a8a"/><rect x="145.60" y="0" width="1.40" height="3.500" fill="#fff45a"/><rect x="146.90" y="0" width="1.40" height="3.500" fill="#35bdf0"/><rect x="148.20" y="0" width="1.40" height="3.500" fill="#ee3aa3"/><rect x="149.50" y="0" width="1.40" height="3.500" fill="#f06a6a"/><rect x="150.80" y="0" width="1.40" height="3.500" fill="#d0d0d0"/><rect x="152.10" y="0" width="1.40" height="3.500" fill="#35bdf0"/><rect x="153.40" y="0" width="1.40" height="3.500" fill="#555"/><rect x="154.70" y="0" width="1.40" height="3.500" fill="#e8e8e8"/><rect x="156.00" y="0" width="1.40" height="3.500" fill="#333"/><rect x="157.30" y="0" width="1.40" height="3.500" fill="#e8e8e8"/><rect x="158.60" y="0" width="1.40" height="3.500" fill="#35bdf0"/><rect x="159.90" y="0" width="1.40" height="3.500" fill="#ee3aa3"/><rect x="161.20" y="0" width="1.40" height="3.500" fill="#5ac08a"/><rect x="162.50" y="0" width="1.40" height="3.500" fill="#35bdf0"/><rect x="163.80" y="0" width="1.40" height="3.500" fill="#f06a6a"/><rect x="165.10" y="0" width="1.40" height="3.500" fill="#333"/><rect x="166.40" y="0" width="1.40" height="3.500" fill="#8a8a8a"/><rect x="167.70" y="0" width="1.40" height="3.500" fill="#6a6ad0"/><rect x="169.00" y="0" width="1.40" height="3.500" fill="#d0d0d0"/><rect x="170.30" y="0" width="1.40" height="3.500" fill="#d0d0d0"/><rect x="171.60" y="0" width="1.40" height="3.500" fill="#5ac08a"/><rect x="172.90" y="0" width="1.40" height="3.500" fill="#333"/><rect x="174.20" y="0" width="1.40" height="3.500" fill="#ee3aa3"/><rect x="175.50" y="0" width="1.40" height="3.500" fill="#35bdf0"/><rect x="176.80" y="0" width="1.40" height="3.500" fill="#e8e8e8"/><rect x="178.10" y="0" width="1.40" height="3.500" fill="#fff45a"/><rect x="179.40" y="0" width="1.40" height="3.500" fill="#8a8a8a"/><rect x="180.70" y="0" width="1.40" height="3.500" fill="#fff45a"/><rect x="182.00" y="0" width="1.40" height="3.500" fill="#35bdf0"/><rect x="183.30" y="0" width="1.40" height="3.500" fill="#35bdf0"/><rect x="184.60" y="0" width="1.40" height="3.500" fill="#35bdf0"/><rect x="185.90" y="0" width="1.40" height="3.500" fill="#f06a6a"/><rect x="187.20" y="0" width="1.40" height="3.500" fill="#ee3aa3"/><rect x="188.50" y="0" width="1.40" height="3.500" fill="#e8e8e8"/><rect x="189.80" y="0" width="1.40" height="3.500" fill="#8a8a8a"/><rect x="191.10" y="0" width="1.40" height="3.500" fill="#f06a6a"/><rect x="192.40" y="0" width="1.40" height="3.500" fill="#555"/><rect x="193.70" y="0" width="1.40" height="3.500" fill="#35bdf0"/><rect x="195.00" y="0" width="1.40" height="3.500" fill="#35bdf0"/><rect x="196.30" y="0" width="1.40" height="3.500" fill="#35bdf0"/><rect x="197.60" y="0" width="1.40" height="3.500" fill="#8a8a8a"/><rect x="198.90" y="0" width="1.40" height="3.500" fill="#35bdf0"/><rect x="200.20" y="0" width="1.40" height="3.500" fill="#fff45a"/><rect x="201.50" y="0" width="1.40" height="3.500" fill="#6a6ad0"/><rect x="202.80" y="0" width="1.40" height="3.500" fill="#555"/><rect x="204.10" y="0" width="1.40" height="3.500" fill="#ee3aa3"/><rect x="205.40" y="0" width="1.40" height="3.500" fill="#5ac08a"/><rect x="206.70" y="0" width="1.40" height="3.500" fill="#5ac08a"/><rect x="208.00" y="0" width="1.40" height="3.500" fill="#d0d0d0"/><rect x="209.30" y="0" width="1.40" height="3.500" fill="#555"/><rect x="210.60" y="0" width="1.40" height="3.500" fill="#5ac08a"/><rect x="211.90" y="0" width="1.40" height="3.500" fill="#ee3aa3"/><rect x="213.20" y="0" width="1.40" height="3.500" fill="#8a8a8a"/><rect x="214.50" y="0" width="1.40" height="3.500" fill="#d0d0d0"/><rect x="215.80" y="0" width="1.40" height="3.500" fill="#333"/><rect x="217.10" y="0" width="1.40" height="3.500" fill="#e8e8e8"/><rect x="218.40" y="0" width="1.40" height="3.500" fill="#fff45a"/><rect x="219.70" y="0" width="1.40" height="3.500" fill="#8a8a8a"/><rect x="221.00" y="0" width="1.40" height="3.500" fill="#fff45a"/><rect x="222.30" y="0" width="1.40" height="3.500" fill="#8a8a8a"/><rect x="223.60" y="0" width="1.40" height="3.500" fill="#ee3aa3"/><rect x="224.90" y="0" width="1.40" height="3.500" fill="#d0d0d0"/><rect x="226.20" y="0" width="1.40" height="3.500" fill="#fff45a"/><rect x="227.50" y="0" width="1.40" height="3.500" fill="#35bdf0"/><rect x="228.80" y="0" width="1.40" height="3.500" fill="#d0d0d0"/><rect x="230.10" y="0" width="1.40" height="3.500" fill="#35bdf0"/><rect x="231.40" y="0" width="1.40" height="3.500" fill="#35bdf0"/><rect x="232.70" y="0" width="1.40" height="3.500" fill="#35bdf0"/><rect x="234.00" y="0" width="1.40" height="3.500" fill="#fff45a"/><rect x="235.30" y="0" width="1.40" height="3.500" fill="#fff45a"/><rect x="236.60" y="0" width="1.40" height="3.500" fill="#35bdf0"/><rect x="237.90" y="0" width="1.40" height="3.500" fill="#6a6ad0"/><rect x="239.20" y="0" width="1.40" height="3.500" fill="#6a6ad0"/><rect x="240.50" y="0" width="1.40" height="3.500" fill="#35bdf0"/><rect x="241.80" y="0" width="1.40" height="3.500" fill="#8a8a8a"/><rect x="243.10" y="0" width="1.40" height="3.500" fill="#d0d0d0"/><rect x="244.40" y="0" width="1.40" height="3.500" fill="#ee3aa3"/><rect x="245.70" y="0" width="1.40" height="3.500" fill="#fff45a"/><rect x="247.00" y="0" width="1.40" height="3.500" fill="#333"/><rect x="248.30" y="0" width="1.40" height="3.500" fill="#ee3aa3"/><rect x="249.60" y="0" width="1.40" height="3.500" fill="#e8e8e8"/><rect x="250.90" y="0" width="1.40" height="3.500" fill="#333"/><rect x="252.20" y="0" width="1.40" height="3.500" fill="#ee3aa3"/><rect x="253.50" y="0" width="1.40" height="3.500" fill="#35bdf0"/><rect x="254.80" y="0" width="1.40" height="3.500" fill="#35bdf0"/><rect x="256.10" y="0" width="1.40" height="3.500" fill="#35bdf0"/><rect x="257.40" y="0" width="1.40" height="3.500" fill="#f06a6a"/><rect x="258.70" y="0" width="1.40" height="3.500" fill="#fff45a"/><rect x="260.00" y="0" width="1.40" height="3.500" fill="#d0d0d0"/><rect x="261.30" y="0" width="1.40" height="3.500" fill="#555"/><rect x="262.60" y="0" width="1.40" height="3.500" fill="#fff45a"/><rect x="263.90" y="0" width="1.40" height="3.500" fill="#d0d0d0"/><rect x="265.20" y="0" width="1.40" height="3.500" fill="#35bdf0"/><rect x="266.50" y="0" width="1.40" height="3.500" fill="#e8e8e8"/><rect x="267.80" y="0" width="1.40" height="3.500" fill="#fff45a"/><rect x="269.10" y="0" width="1.40" height="3.500" fill="#d0d0d0"/><rect x="270.40" y="0" width="1.40" height="3.500" fill="#333"/><rect x="271.70" y="0" width="1.40" height="3.500" fill="#35bdf0"/><rect x="273.00" y="0" width="1.40" height="3.500" fill="#35bdf0"/><rect x="274.30" y="0" width="1.40" height="3.500" fill="#ee3aa3"/><rect x="275.60" y="0" width="1.40" height="3.500" fill="#5ac08a"/><rect x="276.90" y="0" width="1.40" height="3.500" fill="#e8e8e8"/><rect x="278.20" y="0" width="1.40" height="3.500" fill="#8a8a8a"/><rect x="279.50" y="0" width="1.40" height="3.500" fill="#6a6ad0"/><rect x="280.80" y="0" width="1.40" height="3.500" fill="#ee3aa3"/><rect x="282.10" y="0" width="1.40" height="3.500" fill="#555"/><rect x="283.40" y="0" width="1.40" height="3.500" fill="#333"/><rect x="284.70" y="0" width="1.40" height="3.500" fill="#fff45a"/><rect x="286.00" y="0" width="1.40" height="3.500" fill="#333"/></g><rect x="17.70" y="53.8" width="95.90" height="80.50000000000001" fill="#8e8e8e" stroke="#2a2a2a" stroke-width="1.300"/><rect x="17.70" y="134.3" width="95.90" height="80.1" fill="#8e8e8e" stroke="#2a2a2a" stroke-width="1.300"/><rect x="119.90" y="20.2" width="80.00" height="96.5" fill="#8e8e8e" stroke="#2a2a2a" stroke-width="1.300"/><rect x="119.90" y="119.3" width="80.00" height="95.10000000000001" fill="#8e8e8e" stroke="#2a2a2a" stroke-width="1.300"/><rect x="199.90" y="20.2" width="80.00" height="96.5" fill="#8e8e8e" stroke="#2a2a2a" stroke-width="1.300"/><rect x="199.90" y="119.3" width="80.00" height="95.10000000000001" fill="#8e8e8e" stroke="#2a2a2a" stroke-width="1.300"/><path d="M16.4 215.6V48.6H115M115 19.3V215.6M115 19.4H281.6V215.6H16.4M115 117.9H281.6" fill="none" stroke="#18ee18" stroke-width="1"/><text x="122.8" y="30" font-size="7.5" fill="#f4f4f4">Без привязки страниц</text><text x="202.8" y="30" font-size="7.5" fill="#f4f4f4">Без привязки страниц</text><text x="122.8" y="127.5" font-size="7.5" fill="#f4f4f4">Без привязки страниц</text><text x="202.8" y="127.5" font-size="7.5" fill="#f4f4f4">Без привязки страниц</text><text x="104.5" y="56.5" transform="rotate(90 104.5 56.5)" font-size="7.5" fill="#f4f4f4">Без привязки страниц</text><text x="104.5" y="137.5" transform="rotate(90 104.5 137.5)" font-size="7.5" fill="#f4f4f4">Без привязки страниц</text><polygon points="279.2,116 263.2,116 279.2,100" fill="#e8cf3c"/><polygon points="279.2,213.7 263.2,213.7 279.2,197.7" fill="#e8cf3c"/><polygon points="18.400,213.700 33.400,213.700 18.400,198.200" fill="#e8cf3c"/><text x="121" y="115.3" text-anchor="start" font-size="16.300" fill="#161616" stroke="#161616" stroke-width="2.100" stroke-linejoin="round">12</text><text x="121" y="115.3" text-anchor="start" font-size="16.300" fill="#fff" stroke="#fff" stroke-width="0.350">12</text><text x="279.3" y="115.3" text-anchor="end" font-size="16.300" fill="#161616" stroke="#161616" stroke-width="2.100" stroke-linejoin="round">5</text><text x="279.3" y="115.3" text-anchor="end" font-size="16.300" fill="#fff" stroke="#fff" stroke-width="0.350">5</text><text x="121" y="213" text-anchor="start" font-size="16.300" fill="#161616" stroke="#161616" stroke-width="2.100" stroke-linejoin="round">14</text><text x="121" y="213" text-anchor="start" font-size="16.300" fill="#fff" stroke="#fff" stroke-width="0.350">14</text><text x="279.3" y="213" text-anchor="end" font-size="16.300" fill="#161616" stroke="#161616" stroke-width="2.100" stroke-linejoin="round">3</text><text x="279.3" y="213" text-anchor="end" font-size="16.300" fill="#fff" stroke="#fff" stroke-width="0.350">3</text><text x="19.3" y="56" text-anchor="start" transform="rotate(90 19.3 56)" font-size="16.300" fill="#161616" stroke="#161616" stroke-width="2.100" stroke-linejoin="round">16</text><text x="19.3" y="56" text-anchor="start" transform="rotate(90 19.3 56)" font-size="16.300" fill="#fff" stroke="#fff" stroke-width="0.350">16</text><text x="19.3" y="206.8" text-anchor="start" transform="rotate(90 19.3 206.8)" font-size="16.300" fill="#161616" stroke="#161616" stroke-width="2.100" stroke-linejoin="round">1</text><text x="19.3" y="206.8" text-anchor="start" transform="rotate(90 19.3 206.8)" font-size="16.300" fill="#fff" stroke="#fff" stroke-width="0.350">1</text><ellipse cx="15.3" cy="237.600" rx="2.900" ry="1.900" fill="#fff" stroke="#222" stroke-width="0.800"/><ellipse cx="282" cy="237.600" rx="2.900" ry="1.900" fill="#fff" stroke="#222" stroke-width="0.800"/><ellipse cx="148.800" cy="236.800" rx="1.600" ry="2.700" fill="#fff" stroke="#222" stroke-width="0.800"/><path d="M50 241l2.5-2.5v2.5zM245.8 241l2.5-2.5v2.5z" fill="#222"/><path d="M5.2 19.8l1.8-1.4v1.8zM291 19.8l1.8-1.4v1.8zM5.500 115.500l1.600-1 0 2zM291 115.500l1.600-1v2zM5.4 216.5l2-1.4v2.6zM290.5 216.5l2-1.4v2.6z" fill="#222"/><rect x="0.700" y="0.600" width="296.700" height="240.900" fill="none" stroke="#2020f0" stroke-width="1.150" stroke-dasharray="2.300 3.400"/></svg>
<svg style="left:1182.8px;top:301.7px" width="298.4" height="242.8" viewBox="0 0 298.4 242.8" font-family="Liberation Sans, sans-serif"><rect x="0" y="0" width="297.4" height="241.8" fill="#dadada"/><rect x="5" y="18.6" width="287.3" height="198.2" fill="#f0f0f0"/><rect x="5" y="217.3" width="287.3" height="3.7" fill="#d99a9a"/><rect x="5" y="216.300" width="287.300" height="1" fill="#1c1cf0"/><g transform="translate(5.4 14.9)"><rect x="0.00" y="0" width="1.40" height="3.500" fill="#333"/><rect x="1.30" y="0" width="1.40" height="3.500" fill="#fff45a"/><rect x="2.60" y="0" width="1.40" height="3.500" fill="#ee3aa3"/><rect x="3.90" y="0" width="1.40" height="3.500" fill="#fff45a"/><rect x="5.20" y="0" width="1.40" height="3.500" fill="#35bdf0"/><rect x="6.50" y="0" width="1.40" height="3.500" fill="#333"/><rect x="7.80" y="0" width="1.40" height="3.500" fill="#ee3aa3"/><rect x="9.10" y="0" width="1.40" height="3.500" fill="#fff45a"/><rect x="10.40" y="0" width="1.40" height="3.500" fill="#333"/><rect x="11.70" y="0" width="1.40" height="3.500" fill="#555"/><rect x="13.00" y="0" width="1.40" height="3.500" fill="#e8e8e8"/><rect x="14.30" y="0" width="1.40" height="3.500" fill="#ee3aa3"/><rect x="15.60" y="0" width="1.40" height="3.500" fill="#5ac08a"/><rect x="16.90" y="0" width="1.40" height="3.500" fill="#333"/><rect x="18.20" y="0" width="1.40" height="3.500" fill="#fff45a"/><rect x="19.50" y="0" width="1.40" height="3.500" fill="#333"/><rect x="20.80" y="0" width="1.40" height="3.500" fill="#35bdf0"/><rect x="22.10" y="0" width="1.40" height="3.500" fill="#35bdf0"/><rect x="23.40" y="0" width="1.40" height="3.500" fill="#8a8a8a"/><rect x="24.70" y="0" width="1.40" height="3.500" fill="#8a8a8a"/><rect x="26.00" y="0" width="1.40" height="3.500" fill="#333"/><rect x="27.30" y="0" width="1.40" height="3.500" fill="#e8e8e8"/><rect x="28.60" y="0" width="1.40" height="3.500" fill="#333"/><rect x="29.90" y="0" width="1.40" height="3.500" fill="#6a6ad0"/><rect x="31.20" y="0" width="1.40" height="3.500" fill="#333"/><rect x="32.50" y="0" width="1.40" height="3.500" fill="#ee3aa3"/><rect x="33.80" y="0" width="1.40" height="3.500" fill="#5ac08a"/><rect x="35.10" y="0" width="1.40" height="3.500" fill="#8a8a8a"/><rect x="36.40" y="0" width="1.40" height="3.500" fill="#fff45a"/><rect x="37.70" y="0" width="1.40" height="3.500" fill="#35bdf0"/><rect x="39.00" y="0" width="1.40" height="3.500" fill="#35bdf0"/><rect x="40.30" y="0" width="1.40" height="3.500" fill="#e8e8e8"/><rect x="41.60" y="0" width="1.40" height="3.500" fill="#e8e8e8"/><rect x="42.90" y="0" width="1.40" height="3.500" fill="#35bdf0"/><rect x="44.20" y="0" width="1.40" height="3.500" fill="#d0d0d0"/><rect x="45.50" y="0" width="1.40" height="3.500" fill="#ee3aa3"/><rect x="46.80" y="0" width="1.40" height="3.500" fill="#d0d0d0"/><rect x="48.10" y="0" width="1.40" height="3.500" fill="#ee3aa3"/><rect x="49.40" y="0" width="1.40" height="3.500" fill="#e8e8e8"/><rect x="50.70" y="0" width="1.40" height="3.500" fill="#555"/><rect x="52.00" y="0" width="1.40" height="3.500" fill="#555"/><rect x="53.30" y="0" width="1.40" height="3.500" fill="#5ac08a"/><rect x="54.60" y="0" width="1.40" height="3.500" fill="#6a6ad0"/><rect x="55.90" y="0" width="1.40" height="3.500" fill="#f06a6a"/><rect x="57.20" y="0" width="1.40" height="3.500" fill="#f06a6a"/><rect x="58.50" y="0" width="1.40" height="3.500" fill="#35bdf0"/><rect x="59.80" y="0" width="1.40" height="3.500" fill="#fff45a"/><rect x="61.10" y="0" width="1.40" height="3.500" fill="#ee3aa3"/><rect x="62.40" y="0" width="1.40" height="3.500" fill="#ee3aa3"/><rect x="63.70" y="0" width="1.40" height="3.500" fill="#ee3aa3"/><rect x="65.00" y="0" width="1.40" height="3.500" fill="#333"/><rect x="66.30" y="0" width="1.40" height="3.500" fill="#e8e8e8"/><rect x="67.60" y="0" width="1.40" height="3.500" fill="#5ac08a"/><rect x="68.90" y="0" width="1.40" height="3.500" fill="#d0d0d0"/><rect x="70.20" y="0" width="1.40" height="3.500" fill="#e8e8e8"/><rect x="71.50" y="0" width="1.40" height="3.500" fill="#e8e8e8"/><rect x="72.80" y="0" width="1.40" height="3.500" fill="#fff45a"/><rect x="74.10" y="0" width="1.40" height="3.500" fill="#35bdf0"/><rect x="75.40" y="0" width="1.40" height="3.500" fill="#8a8a8a"/><rect x="76.70" y="0" width="1.40" height="3.500" fill="#555"/><rect x="78.00" y="0" width="1.40" height="3.500" fill="#fff45a"/><rect x="79.30" y="0" width="1.40" height="3.500" fill="#6a6ad0"/><rect x="80.60" y="0" width="1.40" height="3.500" fill="#e8e8e8"/><rect x="81.90" y="0" width="1.40" height="3.500" fill="#555"/><rect x="83.20" y="0" width="1.40" height="3.500" fill="#35bdf0"/><rect x="84.50" y="0" width="1.40" height="3.500" fill="#5ac08a"/><rect x="85.80" y="0" width="1.40" height="3.500" fill="#ee3aa3"/><rect x="87.10" y="0" width="1.40" height="3.500" fill="#e8e8e8"/><rect x="88.40" y="0" width="1.40" height="3.500" fill="#333"/><rect x="89.70" y="0" width="1.40" height="3.500" fill="#555"/><rect x="91.00" y="0" width="1.40" height="3.500" fill="#6a6ad0"/><rect x="92.30" y="0" width="1.40" height="3.500" fill="#555"/><rect x="93.60" y="0" width="1.40" height="3.500" fill="#6a6ad0"/><rect x="94.90" y="0" width="1.40" height="3.500" fill="#8a8a8a"/><rect x="96.20" y="0" width="1.40" height="3.500" fill="#35bdf0"/><rect x="97.50" y="0" width="1.40" height="3.500" fill="#e8e8e8"/><rect x="98.80" y="0" width="1.40" height="3.500" fill="#ee3aa3"/><rect x="100.10" y="0" width="1.40" height="3.500" fill="#fff45a"/><rect x="101.40" y="0" width="1.40" height="3.500" fill="#ee3aa3"/><rect x="102.70" y="0" width="1.40" height="3.500" fill="#5ac08a"/><rect x="104.00" y="0" width="1.40" height="3.500" fill="#8a8a8a"/><rect x="105.30" y="0" width="1.40" height="3.500" fill="#555"/><rect x="106.60" y="0" width="1.40" height="3.500" fill="#555"/><rect x="107.90" y="0" width="1.40" height="3.500" fill="#333"/><rect x="109.20" y="0" width="1.40" height="3.500" fill="#35bdf0"/><rect x="110.50" y="0" width="1.40" height="3.500" fill="#ee3aa3"/><rect x="111.80" y="0" width="1.40" height="3.500" fill="#e8e8e8"/><rect x="113.10" y="0" width="1.40" height="3.500" fill="#d0d0d0"/><rect x="114.40" y="0" width="1.40" height="3.500" fill="#fff45a"/><rect x="115.70" y="0" width="1.40" height="3.500" fill="#6a6ad0"/><rect x="117.00" y="0" width="1.40" height="3.500" fill="#8a8a8a"/><rect x="118.30" y="0" width="1.40" height="3.500" fill="#555"/><rect x="119.60" y="0" width="1.40" height="3.500" fill="#5ac08a"/><rect x="120.90" y="0" width="1.40" height="3.500" fill="#35bdf0"/><rect x="122.20" y="0" width="1.40" height="3.500" fill="#5ac08a"/><rect x="123.50" y="0" width="1.40" height="3.500" fill="#fff45a"/><rect x="124.80" y="0" width="1.40" height="3.500" fill="#f06a6a"/><rect x="126.10" y="0" width="1.40" height="3.500" fill="#555"/><rect x="127.40" y="0" width="1.40" height="3.500" fill="#fff45a"/><rect x="128.70" y="0" width="1.40" height="3.500" fill="#d0d0d0"/><rect x="130.00" y="0" width="1.40" height="3.500" fill="#fff45a"/><rect x="131.30" y="0" width="1.40" height="3.500" fill="#f06a6a"/><rect x="132.60" y="0" width="1.40" height="3.500" fill="#ee3aa3"/><rect x="133.90" y="0" width="1.40" height="3.500" fill="#e8e8e8"/><rect x="135.20" y="0" width="1.40" height="3.500" fill="#ee3aa3"/><rect x="136.50" y="0" width="1.40" height="3.500" fill="#333"/><rect x="137.80" y="0" width="1.40" height="3.500" fill="#6a6ad0"/><rect x="139.10" y="0" width="1.40" height="3.500" fill="#35bdf0"/><rect x="140.40" y="0" width="1.40" height="3.500" fill="#333"/><rect x="141.70" y="0" width="1.40" height="3.500" fill="#e8e8e8"/><rect x="143.00" y="0" width="1.40" height="3.500" fill="#fff45a"/><rect x="144.30" y="0" width="1.40" height="3.500" fill="#35bdf0"/><rect x="145.60" y="0" width="1.40" height="3.500" fill="#d0d0d0"/><rect x="146.90" y="0" width="1.40" height="3.500" fill="#e8e8e8"/><rect x="148.20" y="0" width="1.40" height="3.500" fill="#8a8a8a"/><rect x="149.50" y="0" width="1.40" height="3.500" fill="#ee3aa3"/><rect x="150.80" y="0" width="1.40" height="3.500" fill="#ee3aa3"/><rect x="152.10" y="0" width="1.40" height="3.500" fill="#6a6ad0"/><rect x="153.40" y="0" width="1.40" height="3.500" fill="#6a6ad0"/><rect x="154.70" y="0" width="1.40" height="3.500" fill="#6a6ad0"/><rect x="156.00" y="0" width="1.40" height="3.500" fill="#ee3aa3"/><rect x="157.30" y="0" width="1.40" height="3.500" fill="#e8e8e8"/><rect x="158.60" y="0" width="1.40" height="3.500" fill="#333"/><rect x="159.90" y="0" width="1.40" height="3.500" fill="#e8e8e8"/><rect x="161.20" y="0" width="1.40" height="3.500" fill="#35bdf0"/><rect x="162.50" y="0" width="1.40" height="3.500" fill="#e8e8e8"/><rect x="163.80" y="0" width="1.40" height="3.500" fill="#333"/><rect x="165.10" y="0" width="1.40" height="3.500" fill="#fff45a"/><rect x="166.40" y="0" width="1.40" height="3.500" fill="#555"/><rect x="167.70" y="0" width="1.40" height="3.500" fill="#d0d0d0"/><rect x="169.00" y="0" width="1.40" height="3.500" fill="#35bdf0"/><rect x="170.30" y="0" width="1.40" height="3.500" fill="#5ac08a"/><rect x="171.60" y="0" width="1.40" height="3.500" fill="#e8e8e8"/><rect x="172.90" y="0" width="1.40" height="3.500" fill="#e8e8e8"/><rect x="174.20" y="0" width="1.40" height="3.500" fill="#6a6ad0"/><rect x="175.50" y="0" width="1.40" height="3.500" fill="#6a6ad0"/><rect x="176.80" y="0" width="1.40" height="3.500" fill="#fff45a"/><rect x="178.10" y="0" width="1.40" height="3.500" fill="#e8e8e8"/><rect x="179.40" y="0" width="1.40" height="3.500" fill="#e8e8e8"/><rect x="180.70" y="0" width="1.40" height="3.500" fill="#fff45a"/><rect x="182.00" y="0" width="1.40" height="3.500" fill="#35bdf0"/><rect x="183.30" y="0" width="1.40" height="3.500" fill="#ee3aa3"/><rect x="184.60" y="0" width="1.40" height="3.500" fill="#35bdf0"/><rect x="185.90" y="0" width="1.40" height="3.500" fill="#f06a6a"/><rect x="187.20" y="0" width="1.40" height="3.500" fill="#d0d0d0"/><rect x="188.50" y="0" width="1.40" height="3.500" fill="#ee3aa3"/><rect x="189.80" y="0" width="1.40" height="3.500" fill="#fff45a"/><rect x="191.10" y="0" width="1.40" height="3.500" fill="#e8e8e8"/><rect x="192.40" y="0" width="1.40" height="3.500" fill="#5ac08a"/><rect x="193.70" y="0" width="1.40" height="3.500" fill="#8a8a8a"/><rect x="195.00" y="0" width="1.40" height="3.500" fill="#d0d0d0"/><rect x="196.30" y="0" width="1.40" height="3.500" fill="#6a6ad0"/><rect x="197.60" y="0" width="1.40" height="3.500" fill="#fff45a"/><rect x="198.90" y="0" width="1.40" height="3.500" fill="#35bdf0"/><rect x="200.20" y="0" width="1.40" height="3.500" fill="#35bdf0"/><rect x="201.50" y="0" width="1.40" height="3.500" fill="#ee3aa3"/><rect x="202.80" y="0" width="1.40" height="3.500" fill="#6a6ad0"/><rect x="204.10" y="0" width="1.40" height="3.500" fill="#e8e8e8"/><rect x="205.40" y="0" width="1.40" height="3.500" fill="#e8e8e8"/><rect x="206.70" y="0" width="1.40" height="3.500" fill="#e8e8e8"/><rect x="208.00" y="0" width="1.40" height="3.500" fill="#35bdf0"/><rect x="209.30" y="0" width="1.40" height="3.500" fill="#8a8a8a"/><rect x="210.60" y="0" width="1.40" height="3.500" fill="#5ac08a"/><rect x="211.90" y="0" width="1.40" height="3.500" fill="#35bdf0"/><rect x="213.20" y="0" width="1.40" height="3.500" fill="#5ac08a"/><rect x="214.50" y="0" width="1.40" height="3.500" fill="#ee3aa3"/><rect x="215.80" y="0" width="1.40" height="3.500" fill="#ee3aa3"/><rect x="217.10" y="0" width="1.40" height="3.500" fill="#e8e8e8"/><rect x="218.40" y="0" width="1.40" height="3.500" fill="#fff45a"/><rect x="219.70" y="0" width="1.40" height="3.500" fill="#ee3aa3"/><rect x="221.00" y="0" width="1.40" height="3.500" fill="#333"/><rect x="222.30" y="0" width="1.40" height="3.500" fill="#6a6ad0"/><rect x="223.60" y="0" width="1.40" height="3.500" fill="#8a8a8a"/><rect x="224.90" y="0" width="1.40" height="3.500" fill="#ee3aa3"/><rect x="226.20" y="0" width="1.40" height="3.500" fill="#333"/><rect x="227.50" y="0" width="1.40" height="3.500" fill="#6a6ad0"/><rect x="228.80" y="0" width="1.40" height="3.500" fill="#fff45a"/><rect x="230.10" y="0" width="1.40" height="3.500" fill="#5ac08a"/><rect x="231.40" y="0" width="1.40" height="3.500" fill="#ee3aa3"/><rect x="232.70" y="0" width="1.40" height="3.500" fill="#ee3aa3"/><rect x="234.00" y="0" width="1.40" height="3.500" fill="#ee3aa3"/><rect x="235.30" y="0" width="1.40" height="3.500" fill="#ee3aa3"/><rect x="236.60" y="0" width="1.40" height="3.500" fill="#e8e8e8"/><rect x="237.90" y="0" width="1.40" height="3.500" fill="#d0d0d0"/><rect x="239.20" y="0" width="1.40" height="3.500" fill="#6a6ad0"/><rect x="240.50" y="0" width="1.40" height="3.500" fill="#e8e8e8"/><rect x="241.80" y="0" width="1.40" height="3.500" fill="#35bdf0"/><rect x="243.10" y="0" width="1.40" height="3.500" fill="#e8e8e8"/><rect x="244.40" y="0" width="1.40" height="3.500" fill="#ee3aa3"/><rect x="245.70" y="0" width="1.40" height="3.500" fill="#ee3aa3"/><rect x="247.00" y="0" width="1.40" height="3.500" fill="#5ac08a"/><rect x="248.30" y="0" width="1.40" height="3.500" fill="#f06a6a"/><rect x="249.60" y="0" width="1.40" height="3.500" fill="#6a6ad0"/><rect x="250.90" y="0" width="1.40" height="3.500" fill="#fff45a"/><rect x="252.20" y="0" width="1.40" height="3.500" fill="#ee3aa3"/><rect x="253.50" y="0" width="1.40" height="3.500" fill="#555"/><rect x="254.80" y="0" width="1.40" height="3.500" fill="#e8e8e8"/><rect x="256.10" y="0" width="1.40" height="3.500" fill="#333"/><rect x="257.40" y="0" width="1.40" height="3.500" fill="#555"/><rect x="258.70" y="0" width="1.40" height="3.500" fill="#8a8a8a"/><rect x="260.00" y="0" width="1.40" height="3.500" fill="#e8e8e8"/><rect x="261.30" y="0" width="1.40" height="3.500" fill="#5ac08a"/><rect x="262.60" y="0" width="1.40" height="3.500" fill="#fff45a"/><rect x="263.90" y="0" width="1.40" height="3.500" fill="#ee3aa3"/><rect x="265.20" y="0" width="1.40" height="3.500" fill="#ee3aa3"/><rect x="266.50" y="0" width="1.40" height="3.500" fill="#6a6ad0"/><rect x="267.80" y="0" width="1.40" height="3.500" fill="#e8e8e8"/><rect x="269.10" y="0" width="1.40" height="3.500" fill="#fff45a"/><rect x="270.40" y="0" width="1.40" height="3.500" fill="#35bdf0"/><rect x="271.70" y="0" width="1.40" height="3.500" fill="#5ac08a"/><rect x="273.00" y="0" width="1.40" height="3.500" fill="#fff45a"/><rect x="274.30" y="0" width="1.40" height="3.500" fill="#fff45a"/><rect x="275.60" y="0" width="1.40" height="3.500" fill="#f06a6a"/><rect x="276.90" y="0" width="1.40" height="3.500" fill="#fff45a"/><rect x="278.20" y="0" width="1.40" height="3.500" fill="#35bdf0"/><rect x="279.50" y="0" width="1.40" height="3.500" fill="#fff45a"/><rect x="280.80" y="0" width="1.40" height="3.500" fill="#5ac08a"/><rect x="282.10" y="0" width="1.40" height="3.500" fill="#35bdf0"/><rect x="283.40" y="0" width="1.40" height="3.500" fill="#8a8a8a"/><rect x="284.70" y="0" width="1.40" height="3.500" fill="#e8e8e8"/><rect x="286.00" y="0" width="1.40" height="3.500" fill="#e8e8e8"/></g><rect x="184.40" y="53.8" width="95.90" height="80.50000000000001" fill="#8e8e8e" stroke="#2a2a2a" stroke-width="1.300"/><rect x="184.40" y="134.3" width="95.90" height="80.1" fill="#8e8e8e" stroke="#2a2a2a" stroke-width="1.300"/><rect x="98.10" y="20.2" width="80.00" height="96.5" fill="#8e8e8e" stroke="#2a2a2a" stroke-width="1.300"/><rect x="98.10" y="119.3" width="80.00" height="95.10000000000001" fill="#8e8e8e" stroke="#2a2a2a" stroke-width="1.300"/><rect x="18.10" y="20.2" width="80.00" height="96.5" fill="#8e8e8e" stroke="#2a2a2a" stroke-width="1.300"/><rect x="18.10" y="119.3" width="80.00" height="95.10000000000001" fill="#8e8e8e" stroke="#2a2a2a" stroke-width="1.300"/><path d="M281.6 215.6V48.6H182.99999999999997M182.99999999999997 19.3V215.6M182.99999999999997 19.4H16.399999999999956V215.6H281.6M182.99999999999997 117.9H16.399999999999956" fill="none" stroke="#18ee18" stroke-width="1"/><text x="20.3" y="30" font-size="7.5" fill="#f4f4f4">Без привязки страниц</text><text x="100.3" y="30" font-size="7.5" fill="#f4f4f4">Без привязки страниц</text><text x="20.3" y="127.5" font-size="7.5" fill="#f4f4f4">Без привязки страниц</text><text x="100.3" y="127.5" font-size="7.5" fill="#f4f4f4">Без привязки страниц</text><text x="193.0" y="131.2" transform="rotate(-90 193.0 131.2)" font-size="7.5" fill="#f4f4f4">Без привязки страниц</text><text x="193.0" y="211.6" transform="rotate(-90 193.0 211.6)" font-size="7.5" fill="#f4f4f4">Без привязки страниц</text><polygon points="18.1,116 34.1,116 18.1,100" fill="#4fc36a"/><polygon points="18.1,213.7 34.1,213.7 18.1,197.7" fill="#4fc36a"/><polygon points="279,213.700 264,213.700 279,198.200" fill="#4fc36a"/><text x="19.3" y="115.3" text-anchor="start" font-size="16.300" fill="#161616" stroke="#161616" stroke-width="2.100" stroke-linejoin="round">6</text><text x="19.3" y="115.3" text-anchor="start" font-size="16.300" fill="#fff" stroke="#fff" stroke-width="0.350">6</text><text x="176.3" y="115.3" text-anchor="end" font-size="16.300" fill="#161616" stroke="#161616" stroke-width="2.100" stroke-linejoin="round">11</text><text x="176.3" y="115.3" text-anchor="end" font-size="16.300" fill="#fff" stroke="#fff" stroke-width="0.350">11</text><text x="19.3" y="213" text-anchor="start" font-size="16.300" fill="#161616" stroke="#161616" stroke-width="2.100" stroke-linejoin="round">4</text><text x="19.3" y="213" text-anchor="start" font-size="16.300" fill="#fff" stroke="#fff" stroke-width="0.350">4</text><text x="176.3" y="213" text-anchor="end" font-size="16.300" fill="#161616" stroke="#161616" stroke-width="2.100" stroke-linejoin="round">13</text><text x="176.3" y="213" text-anchor="end" font-size="16.300" fill="#fff" stroke="#fff" stroke-width="0.350">13</text><text x="278.6" y="72.8" text-anchor="start" transform="rotate(-90 278.6 72.8)" font-size="16.300" fill="#161616" stroke="#161616" stroke-width="2.100" stroke-linejoin="round">15</text><text x="278.6" y="72.8" text-anchor="start" transform="rotate(-90 278.6 72.8)" font-size="16.300" fill="#fff" stroke="#fff" stroke-width="0.350">15</text><text x="278.6" y="213.6" text-anchor="start" transform="rotate(-90 278.6 213.6)" font-size="16.300" fill="#161616" stroke="#161616" stroke-width="2.100" stroke-linejoin="round">2</text><text x="278.6" y="213.6" text-anchor="start" transform="rotate(-90 278.6 213.6)" font-size="16.300" fill="#fff" stroke="#fff" stroke-width="0.350">2</text><ellipse cx="15.3" cy="237.600" rx="2.900" ry="1.900" fill="#fff" stroke="#222" stroke-width="0.800"/><ellipse cx="282" cy="237.600" rx="2.900" ry="1.900" fill="#fff" stroke="#222" stroke-width="0.800"/><ellipse cx="148.800" cy="236.800" rx="1.600" ry="2.700" fill="#fff" stroke="#222" stroke-width="0.800"/><path d="M247.99999999999997 241l2.5-2.5v2.5zM52.19999999999997 241l2.5-2.5v2.5z" fill="#222"/><path d="M5.2 19.8l1.8-1.4v1.8zM291 19.8l1.8-1.4v1.8zM5.500 115.500l1.600-1 0 2zM291 115.500l1.600-1v2zM5.4 216.5l2-1.4v2.6zM290.5 216.5l2-1.4v2.6z" fill="#222"/><rect x="0.700" y="0.600" width="296.700" height="240.900" fill="none" stroke="#2020f0" stroke-width="1.150" stroke-dasharray="2.300 3.400"/></svg>
<div class="t" style="left:826px;top:661.0px;height:12px;line-height:12px;font-size:9.4px;color:#fff;">X:</div>
<div class="fld" style="left:839.6px;top:659px;width:62.4px;height:15.6px;line-height:14.0px;">36,66</div>
<div class="t" style="left:909.5px;top:661.0px;height:12px;line-height:12px;font-size:9.4px;color:#fff;">Y:</div>
<div class="fld" style="left:922px;top:659px;width:62.4px;height:15.6px;line-height:14.0px;">99,8</div>
<div class="t" style="left:826px;top:684.7px;height:12px;line-height:12px;font-size:9.4px;color:#fff;">Ш:</div>
<div class="fld" style="left:839.6px;top:682.7px;width:62.4px;height:15.6px;line-height:14.0px;">0,0</div>
<div class="t" style="left:909.5px;top:684.7px;height:12px;line-height:12px;font-size:9.4px;color:#fff;">В:</div>
<div class="fld" style="left:922px;top:682.7px;width:62.4px;height:15.6px;line-height:14.0px;">0,0</div>
<div style="left:997px;top:658.8px;width:14.8px;height:14.6px;background:#97989d;"></div>
<div style="left:1016.4px;top:658.8px;width:14.8px;height:14.6px;background:#97989d;"></div>
<div style="left:1035.8px;top:658.8px;width:14.8px;height:14.6px;background:#c9c9cb;"></div>
<div style="left:1055.3px;top:658.8px;width:14.8px;height:14.6px;background:#97989d;"></div>
<div style="left:1075px;top:658.8px;width:14.8px;height:14.6px;background:#97989d;"></div>
<div style="left:1094.5px;top:658.8px;width:14.8px;height:14.6px;background:#97989d;"></div>
<div style="left:1114px;top:658.8px;width:14.8px;height:14.6px;background:#4a4b53;border:1px solid #6d6e75;"></div>
<div style="left:1133.7px;top:658.8px;width:14.8px;height:14.6px;background:#4a4b53;border:1px solid #8a8b90;"></div>
<div style="left:1153px;top:658.8px;width:14.8px;height:14.6px;background:#97989d;"></div>
<svg style="left:997px;top:658.8px" width="15" height="15" viewBox="0 0 15 15"><path d="M2.2 2.2L13.8 8.2 7 13.8z" fill="#fff"/></svg>
<svg style="left:1016.4px;top:658.8px" width="15" height="15" viewBox="0 0 15 15"><rect x="1.6" y="1.8" width="11" height="10.4" fill="none" stroke="#fff" stroke-width="1"/><rect x="3.6" y="3.8" width="7" height="6.4" fill="none" stroke="#e6e6e8" stroke-width="0.8"/><path d="M6 5.6L14.4 9.6 10 14.6z" fill="#fff"/></svg>
<svg style="left:1035.8px;top:658.8px" width="15" height="15" viewBox="0 0 15 15"><circle cx="5.8" cy="5.8" r="3.6" fill="#fff" stroke="#222" stroke-width="1.2"/><path d="M8.4 8.4L13.4 13.4" stroke="#222" stroke-width="1.8"/></svg>
<svg style="left:1055.3px;top:658.8px" width="15" height="15" viewBox="0 0 15 15"><path d="M4 13.6C2.6 11 2 9 3.2 8.6c.8-.2 1.2.6 1.6 1.6V4.6c0-1 1.2-1 1.3 0V3.400c.1-1 1.300-1 1.400 0V4c.1-1 1.300-.9 1.400.1v1c.1-.9 1.200-.8 1.300.1 0 3 .3 5.400-.8 8.400" fill="none" stroke="#f4f4f5" stroke-width="1.100"/></svg>
<svg style="left:1075px;top:658.8px" width="15" height="15" viewBox="0 0 15 15"><path d="M4.200 2v11.600M10.800 2v11.600M1.800 4.400h11.600M1.800 11.200h11.600" stroke="#fff" stroke-width="1.1" fill="none"/></svg>
<svg style="left:1094.5px;top:658.8px" width="15" height="15" viewBox="0 0 15 15"><path d="M2 2.200h5.600v6.400H2zM5.200 5.400h2.600l1 1.200h4v6.200h-7.600z" fill="none" stroke="#fff" stroke-width="1.1"/><path d="M10 2.200c1.600 0 2.600.6 2.800 2.200l.9-.6-1 2-1.600-1.500 1 .2c-.2-1-.9-1.500-2.100-1.500z" fill="#fff"/></svg>
<svg style="left:1114px;top:658.8px" width="15" height="15" viewBox="0 0 15 15"><path d="M3.400 3.400l8.200 8.200M11.600 3.400l-8.200 8.200M3 5.800V3h2.800M9.200 3H12v2.800M12 9.200V12H9.200M5.800 12H3V9.200" stroke="#77787f" stroke-width="1" fill="none"/></svg>
<svg style="left:1133.7px;top:658.8px" width="15" height="15" viewBox="0 0 15 15"><path d="M9.400 1.800c1.600 2 2.400 3.800 2.400 5.600 0 1-.6 1.600-.8 2.400h-3.200c-.2-.8-.8-1.400-.8-2.400 0-1.800.8-3.600 2.400-5.600z" fill="#fff"/><circle cx="9.400" cy="6.800" r="0.900" fill="#4a4b53"/><rect x="7.400" y="10.400" width="4" height="3" fill="#fff"/><path d="M3 13.800h9.400" stroke="#fff" stroke-width="0.700"/></svg>
<svg style="left:1153px;top:658.8px" width="15" height="15" viewBox="0 0 15 15"><path d="M2.200 2.600v10M12.800 2.600v10M3.400 7.600h8.200" stroke="#fff" stroke-width="1.200"/><path d="M3 7.600l2.800-2v4zM12 7.600l-2.800-2v4z" fill="#fff"/></svg>
<div style="left:1367px;top:659.4px;width:23px;height:15px;background:#93949a;"></div>
<div style="left:1397.8px;top:659.4px;width:23.2px;height:15px;background:#93949a;"></div>
<div style="left:1428.9px;top:659.4px;width:23px;height:15px;background:#93949a;"></div>
<div style="left:1459.3px;top:659.4px;width:24.5px;height:16.7px;background:#93949a;"></div>
<svg style="left:1371.5px;top:660.5px" width="14" height="13" viewBox="0 0 14 13"><rect x="1" y="1.600" width="12" height="8" fill="none" stroke="#fff" stroke-width="1"/><path d="M3 3.200h3.200v5H3zM7.800 3.200H11v5H7.800z" fill="none" stroke="#e8e8ea" stroke-width="0.700"/><path d="M1 11.200h12" stroke="#fff" stroke-width="1.300"/></svg>
<svg style="left:1402.5px;top:660.9px" width="14" height="12" viewBox="0 0 14 12"><g fill="none" stroke="#fff"><circle cx="4.200" cy="6" r="2.100" stroke-width="1.900"/><circle cx="4.200" cy="6" r="3.500" stroke-width="1.300" stroke-dasharray="1.100 1.100"/><circle cx="10" cy="6" r="2.100" stroke-width="1.900"/><circle cx="10" cy="6" r="3.500" stroke-width="1.300" stroke-dasharray="1.100 1.100"/></g></svg>
<svg style="left:1432.5px;top:660.5px" width="14" height="13" viewBox="0 0 14 13"><path d="M1.500 1.500v5M8.500 1.500v5M2 4h6" stroke="#fff" stroke-width="1"/><path d="M2 4l2-1.400v2.800zM8 4l-2-1.400v2.800z" fill="#fff"/><path d="M8 8.200l3.600 3.600M11.600 8.200L8 11.800" stroke="#fff" stroke-width="1.100"/></svg>
<svg style="left:1464px;top:661px" width="15" height="14" viewBox="0 0 15 14"><path d="M1.500 3l5 2M1 7h5M1.500 11l5-2" stroke="#fff" stroke-width="0.900"/><path d="M7 1.600l6.500 3.200v4.400L7 12.400" fill="none" stroke="#fff" stroke-width="0.900"/><path d="M9.300 4.600L7.600 7l1.700 2.400L10.700 7z" fill="#fff"/></svg>
<div class="fld" style="left:996.6px;top:682.5px;width:151px;height:15.8px;line-height:14.0px;padding-left:2px;background:#5b5c64;">Авто Печатная форма (18 %)</div>
<div style="left:1135.8px;top:683.3px;width:11.3px;height:14.200000000000001px;background:#97989d;"></div>
<svg style="left:1137.7px;top:688.6px" width="8" height="5" viewBox="0 0 8 5"><path d="M0.400 0.500h7.200L4 4.400z" fill="#fff"/></svg>
<div class="fld" style="left:1157px;top:682.5px;width:68px;height:15.8px;line-height:14.0px;padding-left:5.5px;background:#5b5c64;">Цветной</div>
<div style="left:1213.2px;top:683.3px;width:11.3px;height:14.200000000000001px;background:#97989d;"></div>
<svg style="left:1215.1000000000001px;top:688.6px" width="8" height="5" viewBox="0 0 8 5"><path d="M0.400 0.500h7.200L4 4.400z" fill="#fff"/></svg>
<div style="left:14px;top:699px;width:236px;height:1.4px;background:#7b7c83;"></div>
<div style="left:14px;top:703px;width:1474px;height:3.8px;background:#8f9096;"></div>
<div style="left:14px;top:706.8px;width:1474px;height:91.2px;background:#4a4b53;"></div>
<div style="left:17px;top:797.500px;width:1474px;height:5.500px;background:linear-gradient(#3b3c42,#5f6068);"></div>
<div style="left:1488px;top:73px;width:6px;height:728px;background:linear-gradient(90deg,#3c3d43,#5f6068);"></div>
<div style="left:18px;top:712.3px;width:1470px;height:15px;background:#97989d;"></div>
<div class="t" style="left:19.5px;top:714.0px;height:12px;line-height:12px;font-size:9.6px;color:#fff;">Без названия/Компонент работы: A</div>
<div class="t" style="left:1400px;top:714.0px;height:12px;line-height:12px;font-size:9.6px;color:#fff;width:86.5px;text-align:right;">Списки</div>
<div style="left:18px;top:745.9px;width:1465px;height:1px;background:#6c6d74;"></div>
<div style="left:18px;top:730.2px;width:94.4px;height:1px;background:#6c6d74;"></div>
<div style="left:112.4px;top:730.2px;width:1.7px;height:15.4px;background:#2f3035;"></div>
<div class="t" style="left:18px;top:732.4px;height:12px;line-height:12px;font-size:9.3px;color:#f7931e;font-weight:bold;width:94.4px;text-align:center;">Печатный лист</div>
<div style="left:114.4px;top:730.2px;width:79.0px;height:15.4px;background:#63646c;border-top:1px solid #7c7d84;"></div>
<div style="left:193.4px;top:730.2px;width:1.7px;height:15.4px;background:#2f3035;"></div>
<div class="t" style="left:114.4px;top:732.4px;height:12px;line-height:12px;font-size:9.3px;color:#fff;font-weight:bold;width:79.0px;text-align:center;">Фальц-лист</div>
<div style="left:195.2px;top:730.2px;width:95.40000000000003px;height:15.4px;background:#63646c;border-top:1px solid #7c7d84;"></div>
<div style="left:290.6px;top:730.2px;width:1.7px;height:15.4px;background:#2f3035;"></div>
<div class="t" style="left:195.2px;top:732.4px;height:12px;line-height:12px;font-size:9.3px;color:#fff;font-weight:bold;width:95.40000000000003px;text-align:center;">Список страниц</div>
<div style="left:292.4px;top:730.2px;width:73.60000000000002px;height:15.4px;background:#63646c;border-top:1px solid #7c7d84;"></div>
<div style="left:366px;top:730.2px;width:1.7px;height:15.4px;background:#2f3035;"></div>
<div class="t" style="left:292.4px;top:732.4px;height:12px;line-height:12px;font-size:9.3px;color:#fff;font-weight:bold;width:73.60000000000002px;text-align:center;">Назначено</div>
<div style="left:367.8px;top:730.2px;width:87.19999999999999px;height:15.4px;background:#63646c;border-top:1px solid #7c7d84;"></div>
<div style="left:455px;top:730.2px;width:1.7px;height:15.4px;background:#2f3035;"></div>
<div class="t" style="left:367.8px;top:732.4px;height:12px;line-height:12px;font-size:9.3px;color:#fff;font-weight:bold;width:87.19999999999999px;text-align:center;">Не назначено</div>
<div style="left:20px;top:749px;width:1466px;height:46.5px;border:1px solid #606169;border-right-color:#3a3b41;border-bottom-color:#3a3b41;"></div>
<div style="left:24px;top:752.6px;width:1458px;height:39px;border:1px solid #77787f;"></div>
<div style="left:24.4px;top:768.9px;width:453.6px;height:15.8px;background:#ff8c00;"></div>
<div style="left:24.4px;top:753.2px;width:62.6px;height:15.3px;border-left:1px solid #75767d;border-top:1px solid #75767d;border-right:1px solid #34353a;border-bottom:1px solid #34353a;"></div>
<div class="t" style="left:24.4px;top:755.0px;height:12px;line-height:12px;font-size:9.3px;color:#fff;font-weight:bold;width:62.6px;text-align:center;">№</div>
<div style="left:87px;top:753.2px;width:78.19999999999999px;height:15.3px;border-left:1px solid #75767d;border-top:1px solid #75767d;border-right:1px solid #34353a;border-bottom:1px solid #34353a;"></div>
<div class="t" style="left:87px;top:755.0px;height:12px;line-height:12px;font-size:9.3px;color:#fff;font-weight:bold;width:78.19999999999999px;text-align:center;">Имя листа</div>
<div style="left:87px;top:768.9px;width:1px;height:22.5px;background:#6d6e75;"></div>
<div class="t" style="left:92.5px;top:771.0px;height:12px;line-height:12px;font-size:9.4px;color:#1a1000;width:72.19999999999999px;">Печатный ли...</div>
<div class="t" style="left:92.5px;top:786.6px;height:12px;line-height:12px;font-size:9.4px;color:#fff;width:72.19999999999999px;clip-path:inset(0 0 7.500px 0);">Печатный ли...</div>
<div style="left:165.2px;top:753.2px;width:62.20000000000002px;height:15.3px;border-left:1px solid #75767d;border-top:1px solid #75767d;border-right:1px solid #34353a;border-bottom:1px solid #34353a;"></div>
<div class="t" style="left:165.2px;top:755.0px;height:12px;line-height:12px;font-size:9.3px;color:#fff;font-weight:bold;width:62.20000000000002px;text-align:center;">Формат</div>
<div style="left:165.2px;top:768.9px;width:1px;height:22.5px;background:#6d6e75;"></div>
<div class="t" style="left:170.7px;top:771.0px;height:12px;line-height:12px;font-size:9.4px;color:#1a1000;width:56.20000000000002px;">745,0 x 60...</div>
<div class="t" style="left:170.7px;top:786.6px;height:12px;line-height:12px;font-size:9.4px;color:#fff;width:56.20000000000002px;clip-path:inset(0 0 7.500px 0);">745,0 x 60...</div>
<div style="left:227.4px;top:753.2px;width:62.79999999999998px;height:15.3px;border-left:1px solid #75767d;border-top:1px solid #75767d;border-right:1px solid #34353a;border-bottom:1px solid #34353a;"></div>
<div class="t" style="left:227.4px;top:755.0px;height:12px;line-height:12px;font-size:9.3px;color:#fff;font-weight:bold;width:62.79999999999998px;text-align:center;">Фальц-лист</div>
<div style="left:227.4px;top:768.9px;width:1px;height:22.5px;background:#6d6e75;"></div>
<div class="t" style="left:232.9px;top:771.0px;height:12px;line-height:12px;font-size:9.4px;color:#1a1000;width:56.79999999999998px;">1, 2, 3(F0...</div>
<div class="t" style="left:232.9px;top:786.6px;height:12px;line-height:12px;font-size:9.4px;color:#fff;width:56.79999999999998px;clip-path:inset(0 0 7.500px 0);">4, 5, 6(F0...</div>
<div style="left:290.2px;top:753.2px;width:62.400000000000034px;height:15.3px;border-left:1px solid #75767d;border-top:1px solid #75767d;border-right:1px solid #34353a;border-bottom:1px solid #34353a;"></div>
<div class="t" style="left:290.2px;top:755.0px;height:12px;line-height:12px;font-size:9.3px;color:#fff;font-weight:bold;width:62.400000000000034px;text-align:center;">Цвета</div>
<div style="left:290.2px;top:768.9px;width:1px;height:22.5px;background:#6d6e75;"></div>
<div class="t" style="left:295.7px;top:771.0px;height:12px;line-height:12px;font-size:9.4px;color:#1a1000;width:56.400000000000034px;">--</div>
<div class="t" style="left:295.7px;top:786.6px;height:12px;line-height:12px;font-size:9.4px;color:#fff;width:56.400000000000034px;clip-path:inset(0 0 7.500px 0);">--</div>
<div style="left:352.6px;top:753.2px;width:62.69999999999999px;height:15.3px;border-left:1px solid #75767d;border-top:1px solid #75767d;border-right:1px solid #34353a;border-bottom:1px solid #34353a;"></div>
<div class="t" style="left:352.6px;top:755.0px;height:12px;line-height:12px;font-size:9.3px;color:#fff;font-weight:bold;width:62.69999999999999px;text-align:center;">Заказ</div>
<div style="left:352.6px;top:768.9px;width:1px;height:22.5px;background:#6d6e75;"></div>
<div class="t" style="left:358.1px;top:771.0px;height:12px;line-height:12px;font-size:9.4px;color:#1a1000;width:56.69999999999999px;">Без назв...</div>
<div class="t" style="left:358.1px;top:786.6px;height:12px;line-height:12px;font-size:9.4px;color:#fff;width:56.69999999999999px;clip-path:inset(0 0 7.500px 0);">Без назв...</div>
<div style="left:415.3px;top:753.2px;width:62.69999999999999px;height:15.3px;border-left:1px solid #75767d;border-top:1px solid #75767d;border-right:1px solid #34353a;border-bottom:1px solid #34353a;"></div>
<div class="t" style="left:415.3px;top:755.0px;height:12px;line-height:12px;font-size:9.3px;color:#fff;font-weight:bold;width:62.69999999999999px;text-align:center;">Размер бум...</div>
<div style="left:415.3px;top:768.9px;width:1px;height:22.5px;background:#6d6e75;"></div>
<div class="t" style="left:420.8px;top:771.0px;height:12px;line-height:12px;font-size:9.4px;color:#1a1000;width:56.69999999999999px;">718,0 x 51...</div>
<div class="t" style="left:420.8px;top:786.6px;height:12px;line-height:12px;font-size:9.4px;color:#fff;width:56.69999999999999px;clip-path:inset(0 0 7.500px 0);">718,0 x 51...</div>
<div style="left:478px;top:753.2px;width:1px;height:38px;background:#6d6e75;"></div>
<div style="left:478px;top:768.1px;width:1003.5px;height:1px;background:#85868c;"></div>
<div style="left:24.4px;top:784.7px;width:453.6px;height:1px;background:#6d6e75;"></div>
<div class="t" style="left:27.5px;top:770.8px;height:12px;line-height:12px;font-size:9.4px;color:#1a1000;font-weight:bold;">+</div>
<svg style="left:32.500px;top:771.200px" width="13" height="11" viewBox="0 0 13 11"><rect x="0.700" y="0.700" width="11.200" height="7.200" fill="none" stroke="#1a1000" stroke-width="1.200"/><path d="M3 2.600h2.600v3.400H3zM7 2.600h2.600v3.400H7z" fill="none" stroke="#1a1000" stroke-width="0.800"/><path d="M0.500 9.600h12" stroke="#1a1000" stroke-width="1.500"/></svg>
<div class="t" style="left:47.5px;top:771.0px;height:12px;line-height:12px;font-size:9.4px;color:#1a1000;">1</div>
<svg style="left:32.500px;top:786.800px" width="13" height="5" viewBox="0 0 13 5"><rect x="0.700" y="0.700" width="11.200" height="7.200" fill="none" stroke="#fff" stroke-width="1.200"/><path d="M3 2.600h2.600v3.400H3zM7 2.600h2.600v3.400H7z" fill="none" stroke="#fff" stroke-width="0.800"/></svg>
<div class="t" style="left:47.5px;top:786.6px;height:12px;line-height:12px;font-size:9.4px;color:#fff;clip-path:inset(0 0 7.500px 0);">2</div>
<div style="left:1467.5px;top:753.2px;width:1px;height:38px;background:#6d6e75;"></div>
<div style="left:1469.6px;top:771px;width:10.2px;height:8.8px;background:#97989d;"></div>
<div style="left:1469.6px;top:781.6px;width:10.2px;height:9.6px;background:#97989d;"></div>
<svg style="left:1469px;top:771px" width="12" height="21" viewBox="0 0 12 21"><path d="M2 6.600h7.400L5.700 2.600z" fill="#fff"/><path d="M2 13.800h7.400L5.700 17.800z" fill="#fff"/></svg>
<div style="left:0px;top:812.5px;width:1500px;height:31.5px;background:linear-gradient(90deg,#1e1e12 0%,#1b2015 20%,#222818 40%,#2a2e1c 55%,#33291f 66%,#3e3e2b 74%,#3a3a26 83%,#2c2c1d 93%,#25251a 100%);"></div>
<div style="left:1111px;top:812.5px;width:37.5px;height:31.5px;background:#5e5e52;"></div>
<div style="left:80px;top:841.8px;width:31.5px;height:2.2px;background:#8fb9e0;"></div>
<div style="left:349px;top:841.8px;width:31px;height:2.2px;background:#8fb9e0;"></div>
<div style="left:1111px;top:841.8px;width:37.5px;height:2.2px;background:#8fb9e0;"></div>
<svg style="left:7.5px;top:818.3px" width="20" height="20" viewBox="0 0 20 20" font-family="Liberation Sans, sans-serif"><path d="M3.500 5.200l5.600-.8v5.200H3.500zM9.900 4.300l6.800-1v6.300H9.900zM3.500 10.400h5.600v5.200l-5.600-.8zM9.900 10.400h6.800v6.300l-6.800-1z" fill="#fff"/></svg>
<svg style="left:46.0px;top:818.3px" width="20" height="20" viewBox="0 0 20 20" font-family="Liberation Sans, sans-serif"><rect x="5.500" y="5.500" width="7.500" height="9" fill="none" stroke="#fff" stroke-width="1.200"/><path d="M3.500 4.200v2M3.500 13.800v2M15.800 4v12" stroke="#fff" stroke-width="1.200"/><rect x="14.900" y="8.600" width="1.900" height="2.400" fill="#fff"/></svg>
<svg style="left:85.5px;top:818.3px" width="20" height="20" viewBox="0 0 20 20" font-family="Liberation Sans, sans-serif"><path d="M2 4.500h6l1.500 1.500H18v9.500H2z" fill="#f5c84a"/><path d="M2 7.500h16v8H2z" fill="#fbd867"/><path d="M5.500 11.500h9v5.500h-9z" fill="#3b8fd9"/><path d="M7.500 14h5v3h-5z" fill="#fbd867"/></svg>
<svg style="left:124.0px;top:818.3px" width="20" height="20" viewBox="0 0 20 20" font-family="Liberation Sans, sans-serif"><rect x="8" y="2.500" width="9.500" height="9.500" rx="1.500" fill="none" stroke="#1a9ad6" stroke-width="2.200"/><rect x="2.500" y="8" width="9.500" height="9.500" rx="1.500" fill="none" stroke="#f28c1a" stroke-width="2.200"/></svg>
<svg style="left:162.5px;top:818.3px" width="20" height="20" viewBox="0 0 20 20" font-family="Liberation Sans, sans-serif"><circle cx="10" cy="10" r="8" fill="#d8141c"/><circle cx="9" cy="9" r="5.800" fill="#2a3bd0"/><circle cx="7.500" cy="7" r="2.800" fill="#fff"/></svg>
<svg style="left:200.5px;top:818.3px" width="20" height="20" viewBox="0 0 20 20" font-family="Liberation Sans, sans-serif"><rect x="4" y="2.500" width="12" height="15" fill="#cfe4f5" stroke="#6aa4d6" stroke-width="1"/><rect x="5.500" y="4" width="9" height="4" fill="#7db6e4"/><path d="M5.500 10h9M5.500 12.500h9M5.500 15h9M8.500 9v7.500M11.500 9v7.500" stroke="#86b7df" stroke-width="0.900"/><rect x="12.500" y="12.500" width="2" height="3.800" fill="#f2a33a"/></svg>
<svg style="left:239.0px;top:818.3px" width="20" height="20" viewBox="0 0 20 20" font-family="Liberation Sans, sans-serif"><rect x="2" y="2" width="16" height="16" rx="3" fill="#e3352b"/><circle cx="10" cy="11" r="4.300" fill="none" stroke="#fff" stroke-width="2"/><circle cx="10" cy="11" r="1.300" fill="#fff"/><circle cx="6" cy="5" r="1.300" fill="#fff"/><circle cx="10" cy="4.300" r="1.300" fill="#fff"/><circle cx="14" cy="5" r="1.300" fill="#fff"/></svg>
<svg style="left:277.0px;top:818.3px" width="20" height="20" viewBox="0 0 20 20" font-family="Liberation Sans, sans-serif"><circle cx="10" cy="10" r="8.500" fill="#6fb43f"/><path d="M6 6.500v5c0 3.500 5 3.500 6.500 1.500M12.500 6.500V13c0 1 .8 1.500 2 1.300" fill="none" stroke="#fff" stroke-width="2.200"/></svg>
<svg style="left:315.5px;top:818.3px" width="20" height="20" viewBox="0 0 20 20" font-family="Liberation Sans, sans-serif"><circle cx="10" cy="10" r="8.500" fill="#7a2bb0"/><path d="M10 4a6 6 0 0 1 0 12M10 6.500a3.500 3.500 0 0 1 0 7M10 9a1 1 0 0 1 0 2" fill="none" stroke="#fff" stroke-width="1.200"/></svg>
<svg style="left:354.0px;top:818.3px" width="20" height="20" viewBox="0 0 20 20" font-family="Liberation Sans, sans-serif"><circle cx="9.500" cy="9.500" r="8" fill="#e33b2e"/><path d="M9.500 9.500L2.600 5.500A8 8 0 0 0 6 16.700z" fill="#2da94f"/><path d="M9.500 9.500l-3.500 7.200A8 8 0 0 0 17.500 9.500z" fill="#fcc31c"/><circle cx="9.500" cy="9.500" r="3.600" fill="#fff"/><circle cx="9.500" cy="9.500" r="2.800" fill="#3f86f4"/><circle cx="15" cy="15" r="4.500" fill="#d81b8c"/><text x="15" y="17.200" font-size="6" fill="#fff" text-anchor="middle">D</text></svg>
<svg style="left:392.5px;top:818.3px" width="20" height="20" viewBox="0 0 20 20" font-family="Liberation Sans, sans-serif"><path d="M10 1.800a8.200 8.200 0 0 0-7 12.400L1.800 18.400l4.400-1.200A8.200 8.200 0 1 0 10 1.800z" fill="#fff"/><circle cx="10" cy="10" r="6.900" fill="#2bb741"/><path d="M7.500 6.200c-1 .8-.8 2.500.8 4.500s3.600 3 4.800 2.400c.8-.5.800-1.200.5-1.500l-1.500-.8-.8.800c-1-.3-2.200-1.600-2.600-2.600l.8-.8-.7-1.700c-.3-.5-.8-.6-1.300-.3z" fill="#fff"/></svg>
<svg style="left:430.5px;top:818.3px" width="20" height="20" viewBox="0 0 20 20" font-family="Liberation Sans, sans-serif"><circle cx="10" cy="10" r="8.500" fill="#2aa3dd"/><path d="M4.500 9.800l10-4-1.700 9-3-2.300-1.600 1.500-.3-2.700 4.600-4.100-5.800 3.500z" fill="#fff"/></svg>
<svg style="left:468.5px;top:818.3px" width="20" height="20" viewBox="0 0 20 20" font-family="Liberation Sans, sans-serif"><rect x="2" y="4" width="16" height="4" fill="#b25fb5"/><rect x="2" y="8.200" width="16" height="4" fill="#3a56c8"/><rect x="2" y="12.400" width="16" height="4" fill="#3c9a45"/><path d="M2 6h16M2 10.200h16M2 14.400h16" stroke="#222" stroke-width="0.600"/><rect x="8.700" y="3" width="2.600" height="14" fill="#d6a540"/></svg>
<svg style="left:506.5px;top:818.3px" width="20" height="20" viewBox="0 0 20 20" font-family="Liberation Sans, sans-serif"><path d="M6.500 3l9.500 1.500-2 12.500-11-1.500z" fill="#bfe3ee"/><path d="M6.500 3l9.500 1.500-.5 2.500L5.800 5.500z" fill="#e8f6fa"/><path d="M14 17l2-12.500 1 .5-1.800 12z" fill="#c9a860"/></svg>
<svg style="left:545.0px;top:818.3px" width="20" height="20" viewBox="0 0 20 20" font-family="Liberation Sans, sans-serif"><circle cx="10" cy="9.500" r="6.500" fill="none" stroke="#f28c1a" stroke-width="3.200"/><path d="M10 8.500a2 2 0 0 1 1 3.800l.8 5.700H8.200l.8-5.700a2 2 0 0 1 1-3.800z" fill="#1c2a6a"/></svg>
<svg style="left:583.5px;top:818.3px" width="20" height="20" viewBox="0 0 20 20" font-family="Liberation Sans, sans-serif"><rect x="2" y="2" width="16" height="16" fill="#d4262c" stroke="#e86a6e" stroke-width="0.800"/><path d="M5 7.500h2.500l1-1.500h3l1 1.500H15V14H5z" fill="#fff"/><circle cx="10" cy="10.600" r="2.400" fill="#d4262c"/><circle cx="10" cy="10.600" r="1.100" fill="#fff"/></svg>
<svg style="left:621.5px;top:818.3px" width="20" height="20" viewBox="0 0 20 20" font-family="Liberation Sans, sans-serif"><path d="M3 2.500h12.500L17.500 4.500v13H3z" fill="#2a50c8"/><rect x="6" y="2.500" width="8" height="5" fill="#e8e8f0"/><rect x="11" y="3.200" width="2" height="3.500" fill="#2a50c8"/><rect x="5" y="10" width="11" height="7.500" fill="#fff"/><path d="M5 12h11M5 14h11M5 16h11" stroke="#e8909a" stroke-width="0.800"/></svg>
<svg style="left:659.5px;top:818.3px" width="20" height="20" viewBox="0 0 20 20" font-family="Liberation Sans, sans-serif"><rect x="8" y="3" width="10" height="14" fill="#fff"/><path d="M10 6h7M10 8.500h7M10 11h7M10 13.500h7" stroke="#2b579a" stroke-width="1"/><path d="M2 3.500l9-1.500v16l-9-1.500z" fill="#2b579a"/><text x="6.500" y="13" font-size="8" font-weight="bold" fill="#fff" text-anchor="middle">W</text></svg>
<svg style="left:698.0px;top:818.3px" width="20" height="20" viewBox="0 0 20 20" font-family="Liberation Sans, sans-serif"><rect x="8" y="3" width="10" height="14" fill="#fff"/><path d="M10 6h7M10 8.500h7M10 11h7M10 13.500h7M13.500 4v12" stroke="#217346" stroke-width="1"/><path d="M2 3.500l9-1.500v16l-9-1.500z" fill="#217346"/><text x="6.500" y="13" font-size="8" font-weight="bold" fill="#fff" text-anchor="middle">X</text></svg>
<svg style="left:736.5px;top:818.3px" width="20" height="20" viewBox="0 0 20 20" font-family="Liberation Sans, sans-serif"><rect x="2" y="2" width="16" height="16" fill="#c8321e" stroke="#f5a623" stroke-width="1.600"/><path d="M3 16c3-8 8-11 14-12-4 3-6 7-7 12z" fill="#f7c948"/><path d="M3 17c4-5 8-6 14-5v5z" fill="#f08a24"/></svg>
<svg style="left:774.5px;top:818.3px" width="20" height="20" viewBox="0 0 20 20" font-family="Liberation Sans, sans-serif"><rect x="2" y="2" width="16" height="16" fill="#7a1620"/><path d="M5 14.500c2-1 4-5 4.500-9 .2-1.500 1.500-1 1 .8-.5 2.200 1 5 4.500 6.200 1.200.5.500 1.500-.8 1-2.500-1-6-.5-9 1.800-.8.500-1.200-.3-.2-.8z" fill="none" stroke="#fff" stroke-width="1"/></svg>
<svg style="left:812.5px;top:818.3px" width="20" height="20" viewBox="0 0 20 20" font-family="Liberation Sans, sans-serif"><rect x="2" y="2" width="16" height="16" fill="#d8ecee"/><text x="10" y="13.500" font-size="13" font-weight="bold" fill="#1a8a94" text-anchor="middle">3</text><path d="M7 16h6" stroke="#1a8a94" stroke-width="1"/></svg>
<svg style="left:851.0px;top:818.3px" width="20" height="20" viewBox="0 0 20 20" font-family="Liberation Sans, sans-serif"><path d="M10 1.500c5 0 8 2.500 8 5.500 0 5-5 11.500-8 11.500S2 12 2 7c0-3 3-5.500 8-5.500z" fill="#8fc23a"/><path d="M10 3c4 0 6.500 2 6.500 4.200 0 4-4 9.800-6.500 9.800S3.500 11.200 3.500 7.200C3.500 5 6 3 10 3z" fill="#e6f2c8"/><path d="M6 5.500l2-1.500 6 7.500-.5 2.500-2.500-.5z" fill="#5a8a1e"/></svg>
<svg style="left:889.5px;top:818.3px" width="20" height="20" viewBox="0 0 20 20" font-family="Liberation Sans, sans-serif"><rect x="2" y="2" width="16" height="16" rx="3.500" fill="#2bd02b"/><path d="M2 12c3 4 12 5 16 0v3c0 3-16 3-16 0z" fill="#1ba31b"/><path d="M5.500 6l2-1.500 7 7.500-2 1.800z" fill="#fff"/></svg>
<svg style="left:927.5px;top:818.3px" width="20" height="20" viewBox="0 0 20 20" font-family="Liberation Sans, sans-serif"><rect x="2" y="2.500" width="16" height="15" rx="1.500" fill="#0a1e2c" stroke="#b5d6ec" stroke-width="1.300"/><text x="10" y="13.600" font-size="9.200" font-weight="bold" fill="#b5d6ec" text-anchor="middle">Lr</text></svg>
<svg style="left:965.5px;top:818.3px" width="20" height="20" viewBox="0 0 20 20" font-family="Liberation Sans, sans-serif"><rect x="2" y="2.500" width="16" height="15" rx="1.500" fill="#2a0a1a" stroke="#f0388a" stroke-width="1.300"/><text x="10" y="13.600" font-size="9.200" font-weight="bold" fill="#f0388a" text-anchor="middle">Id</text></svg>
<svg style="left:1004.0px;top:818.3px" width="20" height="20" viewBox="0 0 20 20" font-family="Liberation Sans, sans-serif"><rect x="2" y="2.500" width="16" height="15" rx="1.500" fill="#2a1200" stroke="#f58a1e" stroke-width="1.300"/><text x="10" y="13.600" font-size="9.200" font-weight="bold" fill="#f58a1e" text-anchor="middle">Ai</text></svg>
<svg style="left:1042.5px;top:818.3px" width="20" height="20" viewBox="0 0 20 20" font-family="Liberation Sans, sans-serif"><rect x="2" y="2.500" width="16" height="15" rx="1.500" fill="#061a30" stroke="#38b8f0" stroke-width="1.300"/><text x="10" y="13.600" font-size="9.200" font-weight="bold" fill="#38b8f0" text-anchor="middle">Ps</text></svg>
<svg style="left:1081.0px;top:818.3px" width="20" height="20" viewBox="0 0 20 20" font-family="Liberation Sans, sans-serif"><path d="M2.500 5.500l14-1.500 1 11.500-14 1.200z" fill="#f2f0ea"/><path d="M4 7l7-2.500 4 4.500-7 2z" fill="#e2602a"/><path d="M4.500 13l4-3 3 2.500-6 1.500z" fill="#6a9a3a"/><path d="M11 12l3-1.500 2 3.500-4 .5z" fill="#b03a2a"/></svg>
<svg style="left:1119.5px;top:818.3px" width="20" height="20" viewBox="0 0 20 20" font-family="Liberation Sans, sans-serif"><rect x="2.500" y="2.500" width="7" height="7" fill="#1a8ab8"/><rect x="10.500" y="2.500" width="7" height="7" fill="#2a9a78"/><rect x="2.500" y="10.500" width="7" height="7" fill="#2aa04a"/><rect x="10.500" y="10.500" width="7" height="7" fill="#d8b82a"/><path d="M2 2l1.500 3M18 2l-1.500 3M2 18l1.500-3M18 18l-1.500-3M2 2l3 1.500M18 2l-3 1.500M2 18l3-1.500M18 18l-3-1.500" stroke="#e3342a" stroke-width="0.900"/></svg>
<svg style="left:1262.5px;top:821.3px" width="14" height="14" viewBox="0 0 14 14" font-family="Liberation Sans, sans-serif"><path d="M1 2.500c2 .8 4-.5 6-.5s4 1.300 6 .5c0 6-2.500 9-6 10.500C3.500 11.500 1 8.500 1 2.500z" fill="#6ac42a"/><path d="M3 4.500l1.500 5 1.500-3.500h2l1.500 3.500 1.500-5" fill="none" stroke="#1a4a0a" stroke-width="1.200"/></svg>
<div style="left:1282px;top:822px;width:12.8px;height:12.4px;background:#10107a;"></div>
<div class="t" style="left:1282px;top:822.4px;height:12px;line-height:12px;font-size:7.8px;color:#fff;font-weight:bold;width:12.8px;text-align:center;">Ru</div>
<svg style="left:1299.7px;top:821.3px" width="14" height="14" viewBox="0 0 14 14" font-family="Liberation Sans, sans-serif"><circle cx="7" cy="7" r="5.800" fill="#e8f08a"/><circle cx="7" cy="7" r="5.800" fill="none" stroke="#c8d040" stroke-width="1"/><path d="M7 7L4 2.500a5.500 5.500 0 0 1 7 1z" fill="#3a3a10"/><path d="M7 7l5 2.500a5.500 5.500 0 0 1-4 3z" fill="#fff"/></svg>
<svg style="left:1318.0px;top:821.3px" width="14" height="14" viewBox="0 0 14 14" font-family="Liberation Sans, sans-serif"><rect x="4" y="1" width="4.500" height="3" fill="none" stroke="#fff" stroke-width="0.900"/><rect x="3" y="4" width="6.500" height="8.500" rx="1" fill="none" stroke="#fff" stroke-width="0.900"/><path d="M9 10.500l1.500 1.500 2.500-3" fill="none" stroke="#fff" stroke-width="0.900"/></svg>
<svg style="left:1337.0px;top:821.3px" width="14" height="14" viewBox="0 0 14 14" font-family="Liberation Sans, sans-serif"><rect x="0" y="0" width="14" height="14" fill="#1c1c1c"/><path d="M1.500 6l6-3 4 1.500-6 3.500z" fill="#6aa82a"/><path d="M2 8l6-3 3.500 1.500L6 10z" fill="#8cc63f"/><circle cx="10" cy="10" r="3" fill="#ddd" stroke="#555" stroke-width="0.600"/><circle cx="10" cy="10" r="1" fill="#444"/></svg>
<svg style="left:1356.0px;top:821.3px" width="14" height="14" viewBox="0 0 14 14" font-family="Liberation Sans, sans-serif"><rect x="3.500" y="2" width="9.500" height="7" fill="none" stroke="#fff" stroke-width="1"/><path d="M8.200 9v2.500M5.500 12h5.500M1 1.500v5M1 4h2.500" stroke="#fff" stroke-width="0.900"/></svg>
<div class="t" style="left:1378px;top:822.4px;height:12px;line-height:12px;font-size:9.2px;color:#fff;">РУС</div>
<div class="t" style="left:1399px;top:815.0px;height:12px;line-height:12px;font-size:9.4px;color:#fff;width:60px;text-align:center;">21:08:07</div>
<div class="t" style="left:1399px;top:829.3px;height:12px;line-height:12px;font-size:9.4px;color:#fff;width:60px;text-align:center;">05.02.2022</div>
<svg style="left:1467px;top:821.500px" width="14" height="14" viewBox="0 0 14 14"><path d="M0.800 0.800h12.400v9.400H8.500L7 12 5.500 10.200H0.800z" fill="none" stroke="#fff" stroke-width="1"/></svg>
<div style="left:1496px;top:812.5px;width:1px;height:31.5px;background:#6a6a5c;"></div>
</body></html>
